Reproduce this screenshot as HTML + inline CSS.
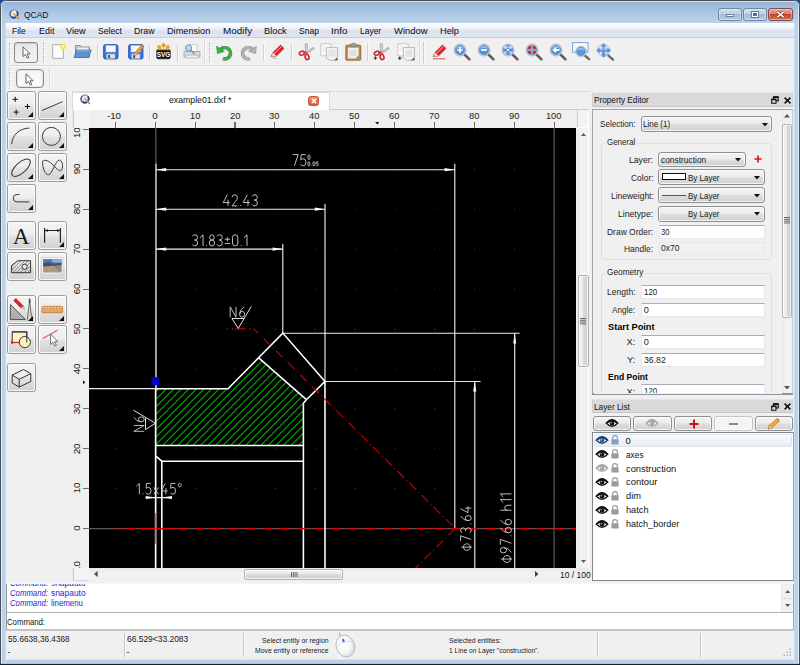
<!DOCTYPE html>
<html>
<head>
<meta charset="utf-8">
<title>QCAD</title>
<style>
html,body{margin:0;padding:0;}
body{width:800px;height:665px;overflow:hidden;background:#0b4aa8;font-family:"Liberation Sans",sans-serif;font-size:9px;color:#000;}
#win{position:absolute;left:0;top:0;width:800px;height:665px;overflow:hidden;border-radius:6px 6px 0 0;background:linear-gradient(#93aed0 0px,#9db9d9 5px,#aac5e2 12px,#b9d2ec 21px,#bbd4ed 40px,#b9d2ea 100%);}
.abs{position:absolute;box-sizing:border-box;}
.t{position:absolute;white-space:nowrap;line-height:1;}
svg{position:absolute;overflow:visible;}
.btn{border:1px solid #8e8f8f;border-radius:3px;background:linear-gradient(#f3f3f3 0,#ececec 48%,#dedede 52%,#d0d0d0 100%);box-shadow:inset 0 0 0 1px rgba(255,255,255,.75);}
.inp{background:#fff;border:1px solid #e3e9ef;border-top-color:#abadb3;}
.ro{background:#f0f0f0;border:1px solid #e6e6e6;}
.grip{border-left:1px dotted #b2b2b2;width:1px;}
.grip2{border-left:1px dotted #fff;width:1px;}
.sep{background:#d2d2d2;width:1px;}
</style>
</head>
<body>
<div id="win">
<div class="abs" style="left:0.00px;top:0.00px;width:800.00px;height:665.00px;border:1px solid #4a4f57;border-radius:6px 6px 0 0;"></div>
<div class="abs" style="left:1.00px;top:1.00px;width:798.00px;height:663.00px;border:1px solid rgba(255,255,255,.6);border-bottom:none;border-radius:5px 5px 0 0;"></div>
<div class="abs" style="left:6.00px;top:22.60px;width:788.00px;height:636.40px;background:#f0f0f0;"></div>
<div class="abs" style="left:5.00px;top:22.00px;width:1.00px;height:637.00px;background:#c9daee;"></div>
<div class="abs" style="left:794.00px;top:22.00px;width:1.00px;height:637.00px;background:#c9daee;"></div>
<div class="abs" style="left:5.00px;top:659.00px;width:790.00px;height:1.00px;background:#d9e6f4;"></div>
<div class="abs" style="left:1.00px;top:662.60px;width:798.00px;height:1.00px;background:#7fd6ea;"></div>
<div class="abs" style="left:0.00px;top:663.60px;width:800.00px;height:1.40px;background:#1a2026;"></div>
<svg style="left:9.0px;top:8.6px" width="11" height="11" viewBox="0 0 11 11"><circle cx="5" cy="5" r="4" fill="#f1f3f8" stroke="#9aa4c4" stroke-width="1.5"/><path d="M2.2 7.8A4 4 0 0 0 7.8 2.2" fill="none" stroke="#2c3f8c" stroke-width="1.7"/><path d="M2.2 7.8A4 4 0 0 1 2.6 1.9" fill="none" stroke="#5a6aa8" stroke-width="1.5"/><path d="M5 2.6V5H3" fill="none" stroke="#b9bccb" stroke-width=".6"/><path d="M5 5L9 9" stroke="#f0a020" stroke-width="1.7" stroke-linecap="round"/><circle cx="9.4" cy="9.4" r=".9" fill="#e07070"/></svg>
<div class="t" style="left:23.60px;top:9.70px;font-size:9.80px;transform:scaleX(0.8653);transform-origin:0 0;color:#10141c;">QCAD</div>
<div class="abs" style="left:717.50px;top:7.50px;width:24.00px;height:13.50px;background:linear-gradient(#cfdff0 0,#bdd0e8 45%,#a3bcdb 50%,#adc5e2 85%,#bcd2ea 100%);border:1px solid #75859c;border-radius:3px;box-shadow:inset 0 0 0 1px rgba(255,255,255,.35);"></div>
<div class="abs" style="left:742.80px;top:7.50px;width:24.00px;height:13.50px;background:linear-gradient(#cfdff0 0,#bdd0e8 45%,#a3bcdb 50%,#adc5e2 85%,#bcd2ea 100%);border:1px solid #75859c;border-radius:3px;box-shadow:inset 0 0 0 1px rgba(255,255,255,.35);"></div>
<div class="abs" style="left:768.00px;top:7.50px;width:25.00px;height:13.50px;background:linear-gradient(#e8a798 0,#d9806c 45%,#c6482e 50%,#d2603f 85%,#e08a62 100%);border:1px solid #7a4a50;border-radius:3px;box-shadow:inset 0 0 0 1px rgba(255,255,255,.35);"></div>
<div class="abs" style="left:725.50px;top:14.20px;width:8.00px;height:3.00px;background:#fff;border:1px solid #6f7c8c;"></div>
<div class="abs" style="left:750.80px;top:11.00px;width:8.00px;height:6.50px;background:#fff;border:1px solid #6f7c8c;"></div>
<div class="abs" style="left:752.80px;top:13.00px;width:4.00px;height:2.50px;background:#5a78a8;border:1px solid #5a6a80;"></div>
<svg style="left:775px;top:10px" width="11" height="9" viewBox="0 0 11 9"><path d="M2.4 1.8L8.6 7.2M8.6 1.8L2.4 7.2" stroke="#5b2a25" stroke-width="2.9" stroke-linecap="butt"/><path d="M2.4 1.8L8.6 7.2M8.6 1.8L2.4 7.2" stroke="#fff" stroke-width="1.7" stroke-linecap="butt"/></svg>
<div class="abs" style="left:6.00px;top:23.00px;width:788.00px;height:15.20px;background:linear-gradient(#ffffff 0,#f4f6fb 25%,#e6eaf5 50%,#dde2f0 55%,#dfe4f1 100%);border-bottom:1px solid #c9cedb;"></div>
<div class="t" style="left:12.40px;top:25.64px;font-size:9.40px;transform:scaleX(0.8979);transform-origin:0 0;color:#0a0a14;">File</div>
<div class="t" style="left:38.60px;top:25.64px;font-size:9.40px;transform:scaleX(0.9507);transform-origin:0 0;color:#0a0a14;">Edit</div>
<div class="t" style="left:66.00px;top:25.64px;font-size:9.40px;transform:scaleX(0.9700);transform-origin:0 0;color:#0a0a14;">View</div>
<div class="t" style="left:97.60px;top:25.64px;font-size:9.40px;transform:scaleX(0.9186);transform-origin:0 0;color:#0a0a14;">Select</div>
<div class="t" style="left:134.00px;top:25.64px;font-size:9.40px;transform:scaleX(0.9391);transform-origin:0 0;color:#0a0a14;">Draw</div>
<div class="t" style="left:167.00px;top:25.64px;font-size:9.40px;transform:scaleX(0.9773);transform-origin:0 0;color:#0a0a14;">Dimension</div>
<div class="t" style="left:223.20px;top:25.64px;font-size:9.40px;transform:scaleX(1.0547);transform-origin:0 0;color:#0a0a14;">Modify</div>
<div class="t" style="left:264.40px;top:25.64px;font-size:9.40px;transform:scaleX(0.9919);transform-origin:0 0;color:#0a0a14;">Block</div>
<div class="t" style="left:299.00px;top:25.64px;font-size:9.40px;transform:scaleX(0.9110);transform-origin:0 0;color:#0a0a14;">Snap</div>
<div class="t" style="left:331.00px;top:25.64px;font-size:9.40px;transform:scaleX(1.0460);transform-origin:0 0;color:#0a0a14;">Info</div>
<div class="t" style="left:360.40px;top:25.64px;font-size:9.40px;transform:scaleX(0.9016);transform-origin:0 0;color:#0a0a14;">Layer</div>
<div class="t" style="left:394.00px;top:25.64px;font-size:9.40px;transform:scaleX(1.0050);transform-origin:0 0;color:#0a0a14;">Window</div>
<div class="t" style="left:440.00px;top:25.64px;font-size:9.40px;transform:scaleX(0.9828);transform-origin:0 0;color:#0a0a14;">Help</div>
<div class="abs" style="left:6.00px;top:65.00px;width:788.00px;height:1.00px;background:#dcdcdc;"></div>
<div class="abs" style="left:6.00px;top:66.00px;width:788.00px;height:1.00px;background:#f8f8f8;"></div>
<div class="abs grip" style="left:9.00px;top:43.00px;width:1.00px;height:20.00px;"></div>
<div class="abs grip2" style="left:10.00px;top:44.00px;width:1.00px;height:20.00px;"></div>
<div class="abs" style="left:14.00px;top:41.60px;width:23.60px;height:21.00px;border:1px solid #8a8a8a;border-radius:3px;background:linear-gradient(#e4e4e4,#ececec 30%,#f2f2f2);box-shadow:inset 0 1px 1px rgba(0,0,0,.12);"></div>
<svg style="left:22.0px;top:46.0px" width="9.0" height="13.0" viewBox="0 0 9 13"><path d="M1 .8V10.6L3.4 8.4L5.2 12.2L6.8 11.5L5.1 7.8H8.2Z" fill="#fff" stroke="#555" stroke-width=".9" stroke-linejoin="round"/></svg>
<div class="abs grip" style="left:43.00px;top:43.00px;width:1.00px;height:20.00px;"></div>
<div class="abs grip2" style="left:44.00px;top:44.00px;width:1.00px;height:20.00px;"></div>
<svg style="left:51px;top:43.1px" width="16" height="17" viewBox="0 0 16 17"><path d="M1.5 1.5h11v14h-11z" fill="#fcfcfc" stroke="#b9b9b9"/><path d="M2.5 2.5h9v12h-9z" fill="none" stroke="#ececec"/><circle cx="12" cy="3.4" r="2.6" fill="#f6e948" stroke="#e9d640" stroke-width=".6"/><circle cx="12" cy="3.4" r="1.1" fill="#fffbd0"/></svg>
<svg style="left:73px;top:43.1px" width="19" height="16" viewBox="0 0 19 16"><path d="M2.5 14V2.5h5l1.2 1.5h7.8v10z" fill="#c9c9c9" stroke="#8f8f8f"/><path d="M4 4.5h11.5v8H4z" fill="#f4f4f4" stroke="#bdbdbd" stroke-width=".6"/><path d="M1 14.5L3.6 7h14.6L15.8 14.5z" fill="#5e93cf" stroke="#3d6ea8" stroke-width=".8"/><path d="M3.9 7.8h13.2" stroke="#a7c6ea" stroke-width=".8"/></svg>
<div class="abs sep" style="left:96.60px;top:44.00px;width:1.00px;height:17.00px;"></div>
<div class="abs" style="left:97.60px;top:44.00px;width:1.00px;height:17.00px;background:#fafafa;"></div>
<svg style="left:103.4px;top:43.6px" width="16" height="16" viewBox="0 0 16 16"><rect x=".7" y=".7" width="14.2" height="14.2" rx="1.6" fill="#3b73e0" stroke="#1f4fb8"/><rect x="3" y="1.6" width="9.6" height="6.4" fill="#f7f9ff" stroke="#c5d3f0" stroke-width=".5"/><rect x="3.6" y="10" width="8.4" height="4.6" fill="#dfe3ea" stroke="#9aa3b5" stroke-width=".5"/><rect x="5" y="11" width="2.2" height="3" fill="#4a5b80"/></svg>
<svg style="left:127.6px;top:43.6px" width="16" height="16" viewBox="0 0 16 16"><rect x=".7" y=".7" width="14.2" height="14.2" rx="1.6" fill="#3b73e0" stroke="#1f4fb8"/><rect x="3" y="1.6" width="9.6" height="6.4" fill="#f7f9ff" stroke="#c5d3f0" stroke-width=".5"/><rect x="3.6" y="10" width="8.4" height="4.6" fill="#dfe3ea" stroke="#9aa3b5" stroke-width=".5"/><rect x="5" y="11" width="2.2" height="3" fill="#4a5b80"/><path d="M6.2 11.4L7 8.6L13.2 1.2L15.4 3L9.2 10.4z" fill="#f0a030" stroke="#b06a18" stroke-width=".6"/><path d="M13.2 1.2L15.4 3L16 2L14.2 .3z" fill="#e05a50"/><path d="M6.2 11.4L7 8.6L9.2 10.4z" fill="#f3dfb8" stroke="#8a6a40" stroke-width=".4"/></svg>
<div class="abs sep" style="left:148.60px;top:44.00px;width:1.00px;height:17.00px;"></div>
<div class="abs" style="left:149.60px;top:44.00px;width:1.00px;height:17.00px;background:#fafafa;"></div>
<svg style="left:156px;top:43.1px" width="15" height="17" viewBox="0 0 15 17"><g fill="#f0a818" stroke="#b87400" stroke-width=".4"><circle cx="7.5" cy="2.2" r="1.7"/><circle cx="3.2" cy="4" r="1.6"/><circle cx="11.8" cy="4" r="1.6"/><circle cx="1.8" cy="7.6" r="1.4"/><circle cx="13.2" cy="7.6" r="1.4"/></g><path d="M7.5 3v5M3.6 4.6l3 3.4M11.4 4.6l-3 3.4" stroke="#f0a818" stroke-width="1.3"/><rect x=".7" y="7.2" width="13.6" height="8.6" rx="1.6" fill="#161616" stroke="#000" stroke-width=".6"/><text x="7.5" y="14.3" font-family="Liberation Sans" font-weight="bold" font-size="6.4" fill="#fff" text-anchor="middle">SVG</text></svg>
<div class="abs sep" style="left:177.40px;top:44.00px;width:1.00px;height:17.00px;"></div>
<div class="abs" style="left:178.40px;top:44.00px;width:1.00px;height:17.00px;background:#fafafa;"></div>
<svg style="left:183px;top:43.1px" width="18" height="17" viewBox="0 0 18 17"><path d="M5 1.5h9v7H5z" fill="#fdfdfd" stroke="#b5b5b5" stroke-width=".7"/><path d="M1 8.5h16v5.5H1z" fill="#d9dadc" stroke="#9b9da1" stroke-width=".8"/><path d="M2.5 12.2h13v2.6h-13z" fill="#f2f2f2" stroke="#a8a8a8" stroke-width=".6"/><circle cx="5.6" cy="5" r="3.1" fill="#b9d4f3" fill-opacity=".85" stroke="#6f8fb8" stroke-width="1"/><path d="M7.9 7.3l3.2 3.2" stroke="#8a8f99" stroke-width="1.5" stroke-linecap="round"/></svg>
<div class="abs" style="left:204.00px;top:39.00px;width:1.00px;height:26.00px;background:#d9d9d9;"></div>
<div class="abs" style="left:205.00px;top:39.00px;width:1.00px;height:26.00px;background:#fbfbfb;"></div>
<div class="abs grip" style="left:209.00px;top:43.00px;width:1.00px;height:20.00px;"></div>
<div class="abs grip2" style="left:210.00px;top:44.00px;width:1.00px;height:20.00px;"></div>
<svg style="left:216.0px;top:43.6px" width="17" height="16" viewBox="0 0 17 16"><g><path d="M4.2 6.2A5.6 5.6 0 1 1 7 14.6" fill="none" stroke="#2a8a34" stroke-width="3.6"/><path d="M4.2 6.2A5.6 5.6 0 1 1 7 14.6" fill="none" stroke="#3fb24a" stroke-width="2.4"/><path d="M.6 2.2L1.4 9.6L8.4 7.4z" fill="#3fb24a" stroke="#2a8a34" stroke-width=".6" stroke-linejoin="round"/></g></svg>
<svg style="left:240.0px;top:43.6px" width="17" height="16" viewBox="0 0 17 16"><g transform="translate(17,0) scale(-1,1)"><path d="M4.2 6.2A5.6 5.6 0 1 1 7 14.6" fill="none" stroke="#8e8e8e" stroke-width="3.6"/><path d="M4.2 6.2A5.6 5.6 0 1 1 7 14.6" fill="none" stroke="#b5b5b5" stroke-width="2.4"/><path d="M.6 2.2L1.4 9.6L8.4 7.4z" fill="#b5b5b5" stroke="#8e8e8e" stroke-width=".6" stroke-linejoin="round"/></g></svg>
<div class="abs sep" style="left:262.60px;top:44.00px;width:1.00px;height:17.00px;"></div>
<div class="abs" style="left:263.60px;top:44.00px;width:1.00px;height:17.00px;background:#fafafa;"></div>
<svg style="left:269.6px;top:43.6px" width="15" height="16" viewBox="0 0 15 16"><path d="M1.2 12.4L3 8.6L10.6 1L14 4.4L6.4 12z" fill="#d8262c" stroke="#a01419" stroke-width=".6"/><path d="M4.4 9.6L11.6 2.4" stroke="#f6b0a8" stroke-width="1"/><path d="M1.2 12.4L3 8.6L6.4 12z" fill="#f3e6d8" stroke="#b9a48f" stroke-width=".5"/><path d="M1.2 12.4l1.1-.4l-.7-.7z" fill="#333"/><path d="M1.6 14.2h5.4" stroke="#cfcfcf" stroke-width="1.6"/></svg>
<div class="abs sep" style="left:291.40px;top:44.00px;width:1.00px;height:17.00px;"></div>
<div class="abs" style="left:292.40px;top:44.00px;width:1.00px;height:17.00px;background:#fafafa;"></div>
<svg style="left:297.6px;top:43.1px" width="17" height="17" viewBox="0 0 17 17"><path d="M7.2 .8L9.4 .8L9.2 9.6L7.6 9.6z" fill="#d6d8db" stroke="#8f9297" stroke-width=".6"/><path d="M15.4 4.2L16.2 5.8L8.8 10.6L8 9.4z" fill="#c8cbcf" stroke="#8f9297" stroke-width=".6"/><ellipse cx="3.8" cy="10.2" rx="2.6" ry="1.9" fill="none" stroke="#d6232a" stroke-width="1.6" transform="rotate(-20 3.8 10.2)"/><ellipse cx="9" cy="14" rx="1.9" ry="2.6" fill="none" stroke="#d6232a" stroke-width="1.6" transform="rotate(-15 9 14)"/><path d="M6 9.6L8.4 9.2M8.4 10.2L8.8 11.6" stroke="#d6232a" stroke-width="1.6"/></svg>
<svg style="left:320.0px;top:43.1px" width="19" height="18" viewBox="0 0 19 18"><path d="M.8 .8h10.4v12H.8z" fill="#fafafa" stroke="#bdbdbd" stroke-width=".8"/><path d="M2.6 3.4h3M2.6 5.4h3M2.6 7.4h3" stroke="#dcdcdc" stroke-width=".7"/><path d="M6.4 4.6h11v12.6H9.6L6.4 14.6z" fill="#f6f6f6" stroke="#a9a9a9" stroke-width=".8"/><path d="M8.4 6.8h7.2v7H8.4z" fill="#e3e3e3"/><path d="M14 17.2L17.4 14.2V17.2z" fill="#555"/></svg>
<svg style="left:345px;top:42.6px" width="17" height="18" viewBox="0 0 17 18"><rect x=".8" y="2.2" width="15" height="15" rx="1" fill="#c48a3a" stroke="#8e5e1e" stroke-width=".8"/><path d="M3 4.6h10.6v10.8H3z" fill="#f2f2f2" stroke="#c9c9c9" stroke-width=".5"/><path d="M4.6 7h7.4v6.4H4.6z" fill="#e0e0e0"/><path d="M4.8 3.8V2.2Q4.8 1 6 1H7Q7.4 0 8.4 0T9.8 1H10.8Q12 1 12 2.2V3.8z" fill="#9a9c9e" stroke="#6d6f72" stroke-width=".6"/><path d="M10.6 15.4L13.6 12.6V15.4z" fill="#777"/></svg>
<div class="abs sep" style="left:367.40px;top:44.00px;width:1.00px;height:17.00px;"></div>
<div class="abs" style="left:368.40px;top:44.00px;width:1.00px;height:17.00px;background:#fafafa;"></div>
<svg style="left:373.0px;top:43.1px" width="17" height="17" viewBox="0 0 17 17"><path d="M7.2 .8L9.4 .8L9.2 9.6L7.6 9.6z" fill="#d6d8db" stroke="#8f9297" stroke-width=".6"/><path d="M15.4 4.2L16.2 5.8L8.8 10.6L8 9.4z" fill="#c8cbcf" stroke="#8f9297" stroke-width=".6"/><ellipse cx="3.8" cy="10.2" rx="2.6" ry="1.9" fill="none" stroke="#d6232a" stroke-width="1.6" transform="rotate(-20 3.8 10.2)"/><ellipse cx="9" cy="14" rx="1.9" ry="2.6" fill="none" stroke="#d6232a" stroke-width="1.6" transform="rotate(-15 9 14)"/><path d="M6 9.6L8.4 9.2M8.4 10.2L8.8 11.6" stroke="#d6232a" stroke-width="1.6"/><path d="M2.4 13.2v3.6M.6 15h3.6" stroke="#333" stroke-width="1"/></svg>
<svg style="left:396.6px;top:43.1px" width="19" height="18" viewBox="0 0 19 18"><path d="M.8 .8h10.4v12H.8z" fill="#fafafa" stroke="#bdbdbd" stroke-width=".8"/><path d="M2.6 3.4h3M2.6 5.4h3M2.6 7.4h3" stroke="#dcdcdc" stroke-width=".7"/><path d="M6.4 4.6h11v12.6H9.6L6.4 14.6z" fill="#f6f6f6" stroke="#a9a9a9" stroke-width=".8"/><path d="M8.4 6.8h7.2v7H8.4z" fill="#e3e3e3"/><path d="M14 17.2L17.4 14.2V17.2z" fill="#555"/><path d="M2.8 13.4v3.6M1 15.2h3.6" stroke="#333" stroke-width="1"/></svg>
<div class="abs" style="left:418.50px;top:39.00px;width:1.00px;height:26.00px;background:#d9d9d9;"></div>
<div class="abs" style="left:419.50px;top:39.00px;width:1.00px;height:26.00px;background:#fbfbfb;"></div>
<div class="abs grip" style="left:423.00px;top:43.00px;width:1.00px;height:20.00px;"></div>
<div class="abs grip2" style="left:424.00px;top:44.00px;width:1.00px;height:20.00px;"></div>
<svg style="left:431.6px;top:43.6px" width="15" height="16" viewBox="0 0 15 16"><path d="M1.2 12.4L3 8.6L10.6 1L14 4.4L6.4 12z" fill="#d8262c" stroke="#a01419" stroke-width=".6"/><path d="M4.4 9.6L11.6 2.4" stroke="#f6b0a8" stroke-width="1"/><path d="M1.2 12.4L3 8.6L6.4 12z" fill="#f3e6d8" stroke="#b9a48f" stroke-width=".5"/><path d="M1.2 12.4l1.1-.4l-.7-.7z" fill="#333"/><path d="M1 14.8h12" stroke="#e0444a" stroke-width="1"/></svg>
<svg style="left:453.4px;top:42.6px" width="18" height="18" viewBox="0 0 18 18"><path d="M10.6 10.8L16.4 16.2" stroke="#7d7d7d" stroke-width="2.8" stroke-linecap="round"/><path d="M10.6 10.8L16.2 16" stroke="#4e4e4e" stroke-width="1.4" stroke-linecap="round"/><circle cx="7" cy="7" r="6" fill="#d5d8dc" stroke="#b4b7bb" stroke-width="1"/><circle cx="7" cy="7" r="4.6" fill="#4f93dc" stroke="#3a78c0" stroke-width=".6"/><path d="M2.8 6A4.4 4.4 0 0 1 11.2 6Q7 4.2 2.8 6z" fill="#9cc6f2" fill-opacity=".8"/><path d="M7 4.2v5.6M4.2 7h5.6" stroke="#fff" stroke-width="1.7"/></svg>
<svg style="left:477.2px;top:42.6px" width="18" height="18" viewBox="0 0 18 18"><path d="M10.6 10.8L16.4 16.2" stroke="#7d7d7d" stroke-width="2.8" stroke-linecap="round"/><path d="M10.6 10.8L16.2 16" stroke="#4e4e4e" stroke-width="1.4" stroke-linecap="round"/><circle cx="7" cy="7" r="6" fill="#d5d8dc" stroke="#b4b7bb" stroke-width="1"/><circle cx="7" cy="7" r="4.6" fill="#4f93dc" stroke="#3a78c0" stroke-width=".6"/><path d="M2.8 6A4.4 4.4 0 0 1 11.2 6Q7 4.2 2.8 6z" fill="#9cc6f2" fill-opacity=".8"/><path d="M4.2 7h5.6" stroke="#fff" stroke-width="1.8"/></svg>
<svg style="left:501.0px;top:42.6px" width="18" height="18" viewBox="0 0 18 18"><path d="M10.6 10.8L16.4 16.2" stroke="#7d7d7d" stroke-width="2.8" stroke-linecap="round"/><path d="M10.6 10.8L16.2 16" stroke="#4e4e4e" stroke-width="1.4" stroke-linecap="round"/><circle cx="7" cy="7" r="6" fill="#d5d8dc" stroke="#b4b7bb" stroke-width="1"/><circle cx="7" cy="7" r="4.6" fill="#4f93dc" stroke="#3a78c0" stroke-width=".6"/><path d="M2.8 6A4.4 4.4 0 0 1 11.2 6Q7 4.2 2.8 6z" fill="#9cc6f2" fill-opacity=".8"/><path d="M4 5.4V4h1.6M8.6 4H10v1.4M10 8.6V10H8.6M5.6 10H4V8.6" fill="none" stroke="#fff" stroke-width="1.1"/><path d="M5.4 5.4l3.2 3.2M8.6 5.4L5.4 8.6" stroke="#fff" stroke-width=".8"/></svg>
<svg style="left:525.0px;top:42.6px" width="18" height="18" viewBox="0 0 18 18"><path d="M10.6 10.8L16.4 16.2" stroke="#7d7d7d" stroke-width="2.8" stroke-linecap="round"/><path d="M10.6 10.8L16.2 16" stroke="#4e4e4e" stroke-width="1.4" stroke-linecap="round"/><circle cx="7" cy="7" r="6" fill="#d5d8dc" stroke="#b4b7bb" stroke-width="1"/><circle cx="7" cy="7" r="4.6" fill="#4f93dc" stroke="#3a78c0" stroke-width=".6"/><path d="M2.8 6A4.4 4.4 0 0 1 11.2 6Q7 4.2 2.8 6z" fill="#9cc6f2" fill-opacity=".8"/><rect x="4.3" y="4.3" width="5.4" height="5.4" fill="#8fbcee" stroke="#cc1c22" stroke-width="1.9"/><path d="M7 3V5M7 9V11M3 7H5M9 7H11" stroke="#8fbcee" stroke-width="1.5"/></svg>
<svg style="left:548.8px;top:42.6px" width="18" height="18" viewBox="0 0 18 18"><path d="M10.6 10.8L16.4 16.2" stroke="#7d7d7d" stroke-width="2.8" stroke-linecap="round"/><path d="M10.6 10.8L16.2 16" stroke="#4e4e4e" stroke-width="1.4" stroke-linecap="round"/><circle cx="7" cy="7" r="6" fill="#d5d8dc" stroke="#b4b7bb" stroke-width="1"/><circle cx="7" cy="7" r="4.6" fill="#4f93dc" stroke="#3a78c0" stroke-width=".6"/><path d="M2.8 6A4.4 4.4 0 0 1 11.2 6Q7 4.2 2.8 6z" fill="#9cc6f2" fill-opacity=".8"/><path d="M3.4 7L7 4V6H10.4V8H7V10z" fill="#fff"/></svg>
<svg style="left:572px;top:42.1px" width="19" height="19" viewBox="0 0 19 19"><rect x=".6" y=".6" width="15.4" height="9.6" fill="#fbfcff" stroke="#7a9fd8" stroke-width="1"/><path d="M12.2 12.8L17 17.2" stroke="#6a6a6a" stroke-width="2.4" stroke-linecap="round"/><circle cx="9" cy="9.4" r="5.4" fill="#d5d8dc" stroke="#b4b7bb" stroke-width=".8"/><circle cx="9" cy="9.4" r="4.2" fill="#5a9ae0" stroke="#3a78c0" stroke-width=".6"/><path d="M5.2 8.4A4 4 0 0 1 12.8 8.4Q9 6.8 5.2 8.4z" fill="#a9cdf4" fill-opacity=".85"/></svg>
<svg style="left:595.5px;top:42.6px" width="19" height="18" viewBox="0 0 19 18"><path d="M11.4 11.6L17 16.6" stroke="#6a6a6a" stroke-width="2.4" stroke-linecap="round"/><circle cx="7.6" cy="7.4" r="6.2" fill="#d9e4f4" fill-opacity=".7" stroke="#b4bcc8" stroke-width=".8"/><path d="M7.6 .6L9.8 3.4H8.6V6.4H11.6V5.2L14.6 7.4L11.6 9.6V8.4H8.6V11.4H9.8L7.6 14.2L5.4 11.4H6.6V8.4H3.6V9.6L.6 7.4L3.6 5.2V6.4H6.6V3.4H5.4z" fill="#5f9de4" stroke="#3f7cc8" stroke-width=".6"/><path d="M6.9 3.6v3.1H3.8M8.3 3.6v3.1h3.1" stroke="#cfe2f8" stroke-width=".5" fill="none"/></svg>
<div class="abs grip" style="left:9.00px;top:68.00px;width:1.00px;height:21.00px;"></div>
<div class="abs grip2" style="left:10.00px;top:69.00px;width:1.00px;height:21.00px;"></div>
<div class="abs" style="left:15.60px;top:69.00px;width:28.60px;height:19.40px;border:1px solid #8b8b8b;border-radius:4px;background:linear-gradient(#f4f4f4,#fbfbfb);box-shadow:inset 0 0 0 1px #e4e4e4;"></div>
<svg style="left:25.2px;top:72.6px" width="9.0" height="13.0" viewBox="0 0 9 13"><path d="M1 .8V10.6L3.4 8.4L5.2 12.2L6.8 11.5L5.1 7.8H8.2Z" fill="#fff" stroke="#555" stroke-width=".9" stroke-linejoin="round"/></svg>
<div class="abs" style="left:48.60px;top:68.00px;width:1.00px;height:21.00px;background:#dadada;"></div>
<div class="abs" style="left:49.60px;top:68.00px;width:1.00px;height:21.00px;background:#fbfbfb;"></div>
<div class="abs" style="left:7.40px;top:91.00px;width:28.60px;height:29.00px;border:1px solid #9b9b9b;border-radius:2.5px;background:linear-gradient(#f4f4f4 0,#eeeeee 45%,#e1e1e1 55%,#d2d2d2 100%);box-shadow:inset 0 0 0 1px rgba(255,255,255,.8);"></div>
<svg style="left:7.4px;top:91.0px" width="28.6" height="29.0" viewBox="0 0 28.6 28.8"><path d="M5.6 8.2h5.2M8.2 5.6v5.2" stroke="#111" stroke-width="1"/><path d="M17.9 15.4h5.2M20.5 12.8v5.2" stroke="#111" stroke-width="1"/><path d="M6.6 21.0h5.2M9.2 18.4v5.2" stroke="#111" stroke-width="1"/></svg>
<svg style="left:28.0px;top:112.0px" width="5" height="5" viewBox="0 0 5 5"><path d="M5 0V5H0z" fill="#111"/></svg>
<div class="abs" style="left:38.40px;top:91.00px;width:28.60px;height:29.00px;border:1px solid #9b9b9b;border-radius:2.5px;background:linear-gradient(#f4f4f4 0,#eeeeee 45%,#e1e1e1 55%,#d2d2d2 100%);box-shadow:inset 0 0 0 1px rgba(255,255,255,.8);"></div>
<svg style="left:38.4px;top:91.0px" width="28.6" height="29.0" viewBox="0 0 28.6 28.8"><path d="M4 19.4L24.6 10.6" stroke="#3a3a3a" stroke-width="1" fill="none"/></svg>
<svg style="left:59.0px;top:112.0px" width="5" height="5" viewBox="0 0 5 5"><path d="M5 0V5H0z" fill="#111"/></svg>
<div class="abs" style="left:7.40px;top:122.00px;width:28.60px;height:29.00px;border:1px solid #9b9b9b;border-radius:2.5px;background:linear-gradient(#f4f4f4 0,#eeeeee 45%,#e1e1e1 55%,#d2d2d2 100%);box-shadow:inset 0 0 0 1px rgba(255,255,255,.8);"></div>
<svg style="left:7.4px;top:122.0px" width="28.6" height="29.0" viewBox="0 0 28.6 28.8"><path d="M4.8 22A17.6 16 0 0 1 22.4 6" stroke="#3a3a3a" stroke-width="1" fill="none"/></svg>
<svg style="left:28.0px;top:143.0px" width="5" height="5" viewBox="0 0 5 5"><path d="M5 0V5H0z" fill="#111"/></svg>
<div class="abs" style="left:38.40px;top:122.00px;width:28.60px;height:29.00px;border:1px solid #9b9b9b;border-radius:2.5px;background:linear-gradient(#f4f4f4 0,#eeeeee 45%,#e1e1e1 55%,#d2d2d2 100%);box-shadow:inset 0 0 0 1px rgba(255,255,255,.8);"></div>
<svg style="left:38.4px;top:122.0px" width="28.6" height="29.0" viewBox="0 0 28.6 28.8"><circle cx="13.4" cy="14.3" r="9" stroke="#3a3a3a" stroke-width="1" fill="none"/></svg>
<svg style="left:59.0px;top:143.0px" width="5" height="5" viewBox="0 0 5 5"><path d="M5 0V5H0z" fill="#111"/></svg>
<div class="abs" style="left:7.40px;top:153.00px;width:28.60px;height:29.00px;border:1px solid #9b9b9b;border-radius:2.5px;background:linear-gradient(#f4f4f4 0,#eeeeee 45%,#e1e1e1 55%,#d2d2d2 100%);box-shadow:inset 0 0 0 1px rgba(255,255,255,.8);"></div>
<svg style="left:7.4px;top:153.0px" width="28.6" height="29.0" viewBox="0 0 28.6 28.8"><ellipse cx="14" cy="14.6" rx="11.6" ry="5.2" transform="rotate(-42 14 14.6)" stroke="#3a3a3a" stroke-width="1" fill="none"/></svg>
<svg style="left:28.0px;top:174.0px" width="5" height="5" viewBox="0 0 5 5"><path d="M5 0V5H0z" fill="#111"/></svg>
<div class="abs" style="left:38.40px;top:153.00px;width:28.60px;height:29.00px;border:1px solid #9b9b9b;border-radius:2.5px;background:linear-gradient(#f4f4f4 0,#eeeeee 45%,#e1e1e1 55%,#d2d2d2 100%);box-shadow:inset 0 0 0 1px rgba(255,255,255,.8);"></div>
<svg style="left:38.4px;top:153.0px" width="28.6" height="29.0" viewBox="0 0 28.6 28.8"><path d="M4.6 8C4.2 14 7 22 10.6 21.6C14.4 21.2 17.6 6.6 21.4 7C24.4 7.4 25 12 24.2 15.4C23 20 20 17 16 12.8C11 7.6 7 6 4.6 8z" stroke="#3a3a3a" stroke-width="1" fill="none"/></svg>
<svg style="left:59.0px;top:174.0px" width="5" height="5" viewBox="0 0 5 5"><path d="M5 0V5H0z" fill="#111"/></svg>
<div class="abs" style="left:7.40px;top:184.00px;width:28.60px;height:29.00px;border:1px solid #9b9b9b;border-radius:2.5px;background:linear-gradient(#f4f4f4 0,#eeeeee 45%,#e1e1e1 55%,#d2d2d2 100%);box-shadow:inset 0 0 0 1px rgba(255,255,255,.8);"></div>
<svg style="left:7.4px;top:184.0px" width="28.6" height="29.0" viewBox="0 0 28.6 28.8"><path d="M12.6 10.4H10A3.7 3.7 0 0 0 10 17.8H22.4" stroke="#3a3a3a" stroke-width="1" fill="none"/></svg>
<svg style="left:28.0px;top:205.0px" width="5" height="5" viewBox="0 0 5 5"><path d="M5 0V5H0z" fill="#111"/></svg>
<div class="abs" style="left:7.40px;top:221.00px;width:28.60px;height:29.00px;border:1px solid #9b9b9b;border-radius:2.5px;background:linear-gradient(#f4f4f4 0,#eeeeee 45%,#e1e1e1 55%,#d2d2d2 100%);box-shadow:inset 0 0 0 1px rgba(255,255,255,.8);"></div>
<svg style="left:7.4px;top:221.0px" width="28.6" height="29.0" viewBox="0 0 28.6 28.8"><text x="14.2" y="22.8" font-family="Liberation Serif" font-size="23.4" text-anchor="middle" fill="#1a1a1a">A</text></svg>
<div class="abs" style="left:38.40px;top:221.00px;width:28.60px;height:29.00px;border:1px solid #9b9b9b;border-radius:2.5px;background:linear-gradient(#f4f4f4 0,#eeeeee 45%,#e1e1e1 55%,#d2d2d2 100%);box-shadow:inset 0 0 0 1px rgba(255,255,255,.8);"></div>
<svg style="left:38.4px;top:221.0px" width="28.6" height="29.0" viewBox="0 0 28.6 28.8"><path d="M6.6 7V21.6M22.4 7V21.6" stroke="#222" stroke-width="1.2"/><path d="M6.6 9.4H22.4" stroke="#222" stroke-width="1"/><path d="M6.8 9.4l3-1.4v2.8zM22.2 9.4l-3-1.4v2.8z" fill="#222"/></svg>
<svg style="left:59.0px;top:242.0px" width="5" height="5" viewBox="0 0 5 5"><path d="M5 0V5H0z" fill="#111"/></svg>
<div class="abs" style="left:7.40px;top:252.00px;width:28.60px;height:29.00px;border:1px solid #9b9b9b;border-radius:2.5px;background:linear-gradient(#f4f4f4 0,#eeeeee 45%,#e1e1e1 55%,#d2d2d2 100%);box-shadow:inset 0 0 0 1px rgba(255,255,255,.8);"></div>
<svg style="left:7.4px;top:252.0px" width="28.6" height="29.0" viewBox="0 0 28.6 28.8"><defs><pattern id="hp" width="2.6" height="2.6" patternUnits="userSpaceOnUse" patternTransform="rotate(45)"><path d="M0 0V2.6" stroke="#444" stroke-width="1"/></pattern></defs><path d="M4.6 20.6V13.4L11 8.6H23.6V20.6z" fill="url(#hp)" stroke="#333" stroke-width="1"/><circle cx="17.6" cy="14.6" r="2.6" fill="#ececec" stroke="#333" stroke-width="1"/></svg>
<div class="abs" style="left:38.40px;top:252.00px;width:28.60px;height:29.00px;border:1px solid #9b9b9b;border-radius:2.5px;background:linear-gradient(#f4f4f4 0,#eeeeee 45%,#e1e1e1 55%,#d2d2d2 100%);box-shadow:inset 0 0 0 1px rgba(255,255,255,.8);"></div>
<svg style="left:38.4px;top:252.0px" width="28.6" height="29.0" viewBox="0 0 28.6 28.8"><rect x="3.6" y="5.6" width="21.4" height="16.4" fill="#fbfbfb" stroke="#c9c9c9" stroke-width=".8"/><rect x="5.2" y="7.2" width="18.2" height="13" fill="#6f6a62"/><rect x="5.2" y="7.2" width="18.2" height="5" fill="#4f78b4"/><path d="M14 7.2H23.4V11L14 10z" fill="#88aee0"/><path d="M5.2 11.4L10 10L15 11.6L23.4 10.6V14H5.2z" fill="#4a4f5c"/><path d="M5.2 20.2V15L16 13.4L23.4 20.2z" fill="#a89b86"/><path d="M17 13.4L23.4 13V20.2z" fill="#8e8a84"/></svg>
<div class="abs" style="left:7.40px;top:294.80px;width:28.60px;height:29.00px;border:1px solid #9b9b9b;border-radius:2.5px;background:linear-gradient(#f4f4f4 0,#eeeeee 45%,#e1e1e1 55%,#d2d2d2 100%);box-shadow:inset 0 0 0 1px rgba(255,255,255,.8);"></div>
<svg style="left:7.4px;top:294.8px" width="28.6" height="29.0" viewBox="0 0 28.6 28.8"><defs><pattern id="hp2" width="2" height="2" patternUnits="userSpaceOnUse"><path d="M0 1H2M1 0V2" stroke="#777" stroke-width=".5"/></pattern></defs><path d="M3.4 24.4V9.4L18.4 24.4z" fill="url(#hp2)" stroke="#555" stroke-width="1"/><path d="M6.6 5.4L9 3.4L16.4 10.8L13.6 12.6z" fill="#d8262c" stroke="#8e1418" stroke-width=".5"/><path d="M13.6 12.6L16.4 10.8L17.6 14z" fill="#f0dcc0" stroke="#555" stroke-width=".4"/><path d="M20.4 24.4L22.6 6L24.8 24.4" fill="none" stroke="#666" stroke-width="1"/><path d="M22.6 3.6V8" stroke="#444" stroke-width="1.6"/></svg>
<svg style="left:28.0px;top:315.8px" width="5" height="5" viewBox="0 0 5 5"><path d="M5 0V5H0z" fill="#111"/></svg>
<div class="abs" style="left:38.40px;top:294.80px;width:28.60px;height:29.00px;border:1px solid #9b9b9b;border-radius:2.5px;background:linear-gradient(#f4f4f4 0,#eeeeee 45%,#e1e1e1 55%,#d2d2d2 100%);box-shadow:inset 0 0 0 1px rgba(255,255,255,.8);"></div>
<svg style="left:38.4px;top:294.8px" width="28.6" height="29.0" viewBox="0 0 28.6 28.8"><rect x="4" y="11.2" width="20.6" height="6.4" rx=".8" fill="#e6a468" stroke="#b87838" stroke-width=".8"/><path d="M4.6 12.2H24" stroke="#f6cfa4" stroke-width="1"/><path d="M6.6 11.4v2M9.6 11.4v2M12.6 11.4v2M15.6 11.4v2M18.6 11.4v2M21.6 11.4v2" stroke="#a86a30" stroke-width=".5"/></svg>
<svg style="left:59.0px;top:315.8px" width="5" height="5" viewBox="0 0 5 5"><path d="M5 0V5H0z" fill="#111"/></svg>
<div class="abs" style="left:7.40px;top:325.30px;width:28.60px;height:29.00px;border:1px solid #9b9b9b;border-radius:2.5px;background:linear-gradient(#f4f4f4 0,#eeeeee 45%,#e1e1e1 55%,#d2d2d2 100%);box-shadow:inset 0 0 0 1px rgba(255,255,255,.8);"></div>
<svg style="left:7.4px;top:325.3px" width="28.6" height="29.0" viewBox="0 0 28.6 28.8"><rect x="5.2" y="6.8" width="14.6" height="10.6" fill="#fdf2c0" stroke="#333" stroke-width="1"/><circle cx="17.8" cy="17" r="5.6" fill="#fdf2c0" stroke="#333" stroke-width="1"/><path d="M5.2 6.8h14.6v10.6" fill="none" stroke="#333" stroke-width="1"/><path d="M4.2 17.4h7.6" stroke="#e02020" stroke-width="1.2"/><rect x="4" y="16.2" width="2.2" height="2.4" fill="#e02020"/></svg>
<div class="abs" style="left:38.40px;top:325.30px;width:28.60px;height:29.00px;border:1px solid #9b9b9b;border-radius:2.5px;background:linear-gradient(#f4f4f4 0,#eeeeee 45%,#e1e1e1 55%,#d2d2d2 100%);box-shadow:inset 0 0 0 1px rgba(255,255,255,.8);"></div>
<svg style="left:38.4px;top:325.3px" width="28.6" height="29.0" viewBox="0 0 28.6 28.8"><path d="M4.6 13.4L19.6 5.2" stroke="#f05058" stroke-width="1.1"/><path d="M12.6 9V19.4L15 17.2L16.8 21L18.4 20.2L16.6 16.6H19.8z" fill="#fff" stroke="#666" stroke-width=".9" stroke-linejoin="round"/></svg>
<svg style="left:59.0px;top:346.3px" width="5" height="5" viewBox="0 0 5 5"><path d="M5 0V5H0z" fill="#111"/></svg>
<div class="abs" style="left:7.40px;top:362.80px;width:28.60px;height:29.00px;border:1px solid #9b9b9b;border-radius:2.5px;background:linear-gradient(#f4f4f4 0,#eeeeee 45%,#e1e1e1 55%,#d2d2d2 100%);box-shadow:inset 0 0 0 1px rgba(255,255,255,.8);"></div>
<svg style="left:7.4px;top:362.8px" width="28.6" height="29.0" viewBox="0 0 28.6 28.8"><path d="M5.2 12L16.6 6.4L23.8 10.6V18.4L12.2 24L5.2 19.8zM5.2 12L12.2 16.2L23.8 10.6M12.2 16.2V24" fill="none" stroke="#333" stroke-width="1" stroke-linejoin="round"/></svg>
<div class="abs" style="left:72.00px;top:91.00px;width:518.00px;height:1.00px;background:#dddddd;"></div>
<div class="abs" style="left:72.00px;top:91.50px;width:257.50px;height:18.00px;background:#fff;border:1px solid #d9d9d9;border-bottom:none;"></div>
<svg style="left:80.4px;top:94.4px" width="11" height="11" viewBox="0 0 11 11"><circle cx="5" cy="5" r="4" fill="#f1f3f8" stroke="#9aa4c4" stroke-width="1.5"/><path d="M2.2 7.8A4 4 0 0 0 7.8 2.2" fill="none" stroke="#2c3f8c" stroke-width="1.7"/><path d="M2.2 7.8A4 4 0 0 1 2.6 1.9" fill="none" stroke="#5a6aa8" stroke-width="1.5"/><path d="M5 2.6V5H3" fill="none" stroke="#b9bccb" stroke-width=".6"/><path d="M5 5L9 9" stroke="#f0a020" stroke-width="1.7" stroke-linecap="round"/><circle cx="9.4" cy="9.4" r=".9" fill="#e07070"/></svg>
<div class="t" style="left:168.80px;top:96.01px;font-size:9.20px;transform:scaleX(0.9474);transform-origin:0 0;color:#111;">example01.dxf *</div>
<div class="abs" style="left:308.30px;top:95.60px;width:11.00px;height:10.40px;background:linear-gradient(#f08a66,#dc5a38);border:1px solid #c9553a;border-radius:2.5px;"></div>
<svg style="left:311px;top:98px" width="6" height="6" viewBox="0 0 6 6"><path d="M.8 .8L5.2 5.2M5.2 .8L.8 5.2" stroke="#fff" stroke-width="1.5"/></svg>
<div class="abs" style="left:72.00px;top:110.00px;width:517.00px;height:18.00px;background:#efefef;"></div>
<div class="abs" style="left:72.00px;top:110.00px;width:17.00px;height:458.00px;background:#efefef;"></div>
<div class="abs" style="left:329.00px;top:109.00px;width:260.00px;height:1.00px;background:#cccccc;"></div>
<div class="abs" style="left:72.50px;top:110.00px;width:16.50px;height:18.00px;background:#f4f4f4;border-left:1px solid #c8c8c8;border-top:1px solid #fff;"></div>
<div class="abs" style="left:576.50px;top:110.00px;width:12.50px;height:18.00px;background:#f3f3f3;border-left:1px solid #cfcfcf;border-right:1px solid #fff;border-bottom:1px solid #fff;"></div>
<div class="abs" style="left:114.82px;top:122.40px;width:1.10px;height:5.60px;background:#6a6a6a;"></div>
<div class="t" style="left:107.12px;top:111.22px;font-size:9.90px;transform:scaleX(0.9784);transform-origin:0 0;color:#222;">-10</div>
<div class="abs" style="left:154.70px;top:122.40px;width:1.10px;height:5.60px;background:#6a6a6a;"></div>
<div class="t" style="left:152.25px;top:111.22px;font-size:9.90px;color:#222;">0</div>
<div class="abs" style="left:194.58px;top:122.40px;width:1.10px;height:5.60px;background:#6a6a6a;"></div>
<div class="t" style="left:189.68px;top:111.22px;font-size:9.90px;transform:scaleX(0.9444);transform-origin:0 0;color:#222;">10</div>
<div class="abs" style="left:234.46px;top:122.40px;width:1.10px;height:5.60px;background:#6a6a6a;"></div>
<div class="t" style="left:229.56px;top:111.22px;font-size:9.90px;transform:scaleX(0.9444);transform-origin:0 0;color:#222;">20</div>
<div class="abs" style="left:274.34px;top:122.40px;width:1.10px;height:5.60px;background:#6a6a6a;"></div>
<div class="t" style="left:269.44px;top:111.22px;font-size:9.90px;transform:scaleX(0.9444);transform-origin:0 0;color:#222;">30</div>
<div class="abs" style="left:314.22px;top:122.40px;width:1.10px;height:5.60px;background:#6a6a6a;"></div>
<div class="t" style="left:309.32px;top:111.22px;font-size:9.90px;transform:scaleX(0.9444);transform-origin:0 0;color:#222;">40</div>
<div class="abs" style="left:354.10px;top:122.40px;width:1.10px;height:5.60px;background:#6a6a6a;"></div>
<div class="t" style="left:349.20px;top:111.22px;font-size:9.90px;transform:scaleX(0.9444);transform-origin:0 0;color:#222;">50</div>
<div class="abs" style="left:393.98px;top:122.40px;width:1.10px;height:5.60px;background:#6a6a6a;"></div>
<div class="t" style="left:389.08px;top:111.22px;font-size:9.90px;transform:scaleX(0.9444);transform-origin:0 0;color:#222;">60</div>
<div class="abs" style="left:433.86px;top:122.40px;width:1.10px;height:5.60px;background:#6a6a6a;"></div>
<div class="t" style="left:428.96px;top:111.22px;font-size:9.90px;transform:scaleX(0.9444);transform-origin:0 0;color:#222;">70</div>
<div class="abs" style="left:473.74px;top:122.40px;width:1.10px;height:5.60px;background:#6a6a6a;"></div>
<div class="t" style="left:468.84px;top:111.22px;font-size:9.90px;transform:scaleX(0.9444);transform-origin:0 0;color:#222;">80</div>
<div class="abs" style="left:513.62px;top:122.40px;width:1.10px;height:5.60px;background:#6a6a6a;"></div>
<div class="t" style="left:508.72px;top:111.22px;font-size:9.90px;transform:scaleX(0.9444);transform-origin:0 0;color:#222;">90</div>
<div class="abs" style="left:553.50px;top:122.40px;width:1.10px;height:5.60px;background:#6a6a6a;"></div>
<div class="t" style="left:546.10px;top:111.22px;font-size:9.90px;transform:scaleX(0.9323);transform-origin:0 0;color:#222;">100</div>
<div class="abs" style="left:83.00px;top:567.68px;width:6.00px;height:1.10px;background:#6a6a6a;"></div>
<div class="abs" style="left:83.00px;top:527.80px;width:6.00px;height:1.10px;background:#6a6a6a;"></div>
<div class="abs" style="left:83.00px;top:487.92px;width:6.00px;height:1.10px;background:#6a6a6a;"></div>
<div class="abs" style="left:83.00px;top:448.04px;width:6.00px;height:1.10px;background:#6a6a6a;"></div>
<div class="abs" style="left:83.00px;top:408.16px;width:6.00px;height:1.10px;background:#6a6a6a;"></div>
<div class="abs" style="left:83.00px;top:368.28px;width:6.00px;height:1.10px;background:#6a6a6a;"></div>
<div class="abs" style="left:83.00px;top:328.40px;width:6.00px;height:1.10px;background:#6a6a6a;"></div>
<div class="abs" style="left:83.00px;top:288.52px;width:6.00px;height:1.10px;background:#6a6a6a;"></div>
<div class="abs" style="left:83.00px;top:248.64px;width:6.00px;height:1.10px;background:#6a6a6a;"></div>
<div class="abs" style="left:83.00px;top:208.76px;width:6.00px;height:1.10px;background:#6a6a6a;"></div>
<div class="abs" style="left:83.00px;top:168.88px;width:6.00px;height:1.10px;background:#6a6a6a;"></div>
<div class="abs" style="left:83.00px;top:129.00px;width:6.00px;height:1.10px;background:#6a6a6a;"></div>
<div class="t" style="left:56.60px;top:563.18px;width:40px;height:10px;text-align:center;font-size:9.9px;color:#111;letter-spacing:-0.15px;transform:rotate(-90deg);">-10</div>
<div class="t" style="left:56.60px;top:523.30px;width:40px;height:10px;text-align:center;font-size:9.9px;color:#111;letter-spacing:-0.15px;transform:rotate(-90deg);">0</div>
<div class="t" style="left:56.60px;top:483.42px;width:40px;height:10px;text-align:center;font-size:9.9px;color:#111;letter-spacing:-0.15px;transform:rotate(-90deg);">10</div>
<div class="t" style="left:56.60px;top:443.54px;width:40px;height:10px;text-align:center;font-size:9.9px;color:#111;letter-spacing:-0.15px;transform:rotate(-90deg);">20</div>
<div class="t" style="left:56.60px;top:403.66px;width:40px;height:10px;text-align:center;font-size:9.9px;color:#111;letter-spacing:-0.15px;transform:rotate(-90deg);">30</div>
<div class="t" style="left:56.60px;top:363.78px;width:40px;height:10px;text-align:center;font-size:9.9px;color:#111;letter-spacing:-0.15px;transform:rotate(-90deg);">40</div>
<div class="t" style="left:56.60px;top:323.90px;width:40px;height:10px;text-align:center;font-size:9.9px;color:#111;letter-spacing:-0.15px;transform:rotate(-90deg);">50</div>
<div class="t" style="left:56.60px;top:284.02px;width:40px;height:10px;text-align:center;font-size:9.9px;color:#111;letter-spacing:-0.15px;transform:rotate(-90deg);">60</div>
<div class="t" style="left:56.60px;top:244.14px;width:40px;height:10px;text-align:center;font-size:9.9px;color:#111;letter-spacing:-0.15px;transform:rotate(-90deg);">70</div>
<div class="t" style="left:56.60px;top:204.26px;width:40px;height:10px;text-align:center;font-size:9.9px;color:#111;letter-spacing:-0.15px;transform:rotate(-90deg);">80</div>
<div class="t" style="left:56.60px;top:164.38px;width:40px;height:10px;text-align:center;font-size:9.9px;color:#111;letter-spacing:-0.15px;transform:rotate(-90deg);">90</div>
<div class="t" style="left:56.60px;top:124.50px;width:40px;height:10px;text-align:center;font-size:9.9px;color:#111;letter-spacing:-0.15px;transform:rotate(-90deg);">100</div>
<div class="abs" style="left:72.50px;top:110.00px;width:16.50px;height:18.00px;background:#f4f4f4;border-left:1px solid #c8c8c8;"></div>
<svg style="left:375.4px;top:122.4px" width="4.6" height="2.8" viewBox="0 0 6 4"><path d="M0 0H6L3 3.6z" fill="#111"/></svg>
<svg style="left:82.8px;top:380px" width="2.6" height="4.4" viewBox="0 0 4 6"><path d="M0 0V6L3.6 3z" fill="#111"/></svg>
<div class="abs" style="left:88.6px;top:127.8px;width:487.7px;height:440.1px;background:#000;overflow:hidden;"><svg style="left:0;top:0" width="487.7" height="440.1" viewBox="88.6 127.8 487.7 440.1"><path d="M114.8 568.2h1M114.8 528.3h1M114.8 488.4h1M114.8 448.5h1M114.8 408.7h1M114.8 368.8h1M114.8 328.9h1M114.8 289.0h1M114.8 249.1h1M114.8 209.3h1M114.8 169.4h1M114.8 129.5h1M154.7 568.2h1M154.7 528.3h1M154.7 488.4h1M154.7 448.5h1M154.7 408.7h1M154.7 368.8h1M154.7 328.9h1M154.7 289.0h1M154.7 249.1h1M154.7 209.3h1M154.7 169.4h1M154.7 129.5h1M194.6 568.2h1M194.6 528.3h1M194.6 488.4h1M194.6 448.5h1M194.6 408.7h1M194.6 368.8h1M194.6 328.9h1M194.6 289.0h1M194.6 249.1h1M194.6 209.3h1M194.6 169.4h1M194.6 129.5h1M234.5 568.2h1M234.5 528.3h1M234.5 488.4h1M234.5 448.5h1M234.5 408.7h1M234.5 368.8h1M234.5 328.9h1M234.5 289.0h1M234.5 249.1h1M234.5 209.3h1M234.5 169.4h1M234.5 129.5h1M274.3 568.2h1M274.3 528.3h1M274.3 488.4h1M274.3 448.5h1M274.3 408.7h1M274.3 368.8h1M274.3 328.9h1M274.3 289.0h1M274.3 249.1h1M274.3 209.3h1M274.3 169.4h1M274.3 129.5h1M314.2 568.2h1M314.2 528.3h1M314.2 488.4h1M314.2 448.5h1M314.2 408.7h1M314.2 368.8h1M314.2 328.9h1M314.2 289.0h1M314.2 249.1h1M314.2 209.3h1M314.2 169.4h1M314.2 129.5h1M354.1 568.2h1M354.1 528.3h1M354.1 488.4h1M354.1 448.5h1M354.1 408.7h1M354.1 368.8h1M354.1 328.9h1M354.1 289.0h1M354.1 249.1h1M354.1 209.3h1M354.1 169.4h1M354.1 129.5h1M394.0 568.2h1M394.0 528.3h1M394.0 488.4h1M394.0 448.5h1M394.0 408.7h1M394.0 368.8h1M394.0 328.9h1M394.0 289.0h1M394.0 249.1h1M394.0 209.3h1M394.0 169.4h1M394.0 129.5h1M433.9 568.2h1M433.9 528.3h1M433.9 488.4h1M433.9 448.5h1M433.9 408.7h1M433.9 368.8h1M433.9 328.9h1M433.9 289.0h1M433.9 249.1h1M433.9 209.3h1M433.9 169.4h1M433.9 129.5h1M473.7 568.2h1M473.7 528.3h1M473.7 488.4h1M473.7 448.5h1M473.7 408.7h1M473.7 368.8h1M473.7 328.9h1M473.7 289.0h1M473.7 249.1h1M473.7 209.3h1M473.7 169.4h1M473.7 129.5h1M513.6 568.2h1M513.6 528.3h1M513.6 488.4h1M513.6 448.5h1M513.6 408.7h1M513.6 368.8h1M513.6 328.9h1M513.6 289.0h1M513.6 249.1h1M513.6 209.3h1M513.6 169.4h1M513.6 129.5h1M553.5 568.2h1M553.5 528.3h1M553.5 488.4h1M553.5 448.5h1M553.5 408.7h1M553.5 368.8h1M553.5 328.9h1M553.5 289.0h1M553.5 249.1h1M553.5 209.3h1M553.5 169.4h1M553.5 129.5h1" stroke="#3c3c3c" stroke-width="1.1"/><path d="M155.5 120V570M553.7 120V570M80 528.5H580" stroke="#6e6e6e" stroke-width="1"/><defs><clipPath id="hc"><path d="M155.2 388.6H227.6L258.6 358L306 399.5L303 403V445.4H155.2z"/></clipPath></defs><path clip-path="url(#hc)" d="M-95.0 340.0L-215.0 460.0M-87.4 340.0L-207.4 460.0M-79.9 340.0L-199.9 460.0M-72.3 340.0L-192.3 460.0M-64.8 340.0L-184.8 460.0M-57.2 340.0L-177.2 460.0M-49.7 340.0L-169.7 460.0M-42.1 340.0L-162.1 460.0M-34.6 340.0L-154.6 460.0M-27.0 340.0L-147.0 460.0M-19.5 340.0L-139.5 460.0M-11.9 340.0L-131.9 460.0M-4.4 340.0L-124.4 460.0M3.2 340.0L-116.8 460.0M10.7 340.0L-109.3 460.0M18.3 340.0L-101.7 460.0M25.8 340.0L-94.2 460.0M33.4 340.0L-86.6 460.0M40.9 340.0L-79.1 460.0M48.5 340.0L-71.5 460.0M56.0 340.0L-64.0 460.0M63.6 340.0L-56.4 460.0M71.1 340.0L-48.9 460.0M78.7 340.0L-41.3 460.0M86.2 340.0L-33.8 460.0M93.8 340.0L-26.2 460.0M101.3 340.0L-18.7 460.0M108.9 340.0L-11.1 460.0M116.4 340.0L-3.6 460.0M124.0 340.0L4.0 460.0M131.5 340.0L11.5 460.0M139.1 340.0L19.1 460.0M146.6 340.0L26.6 460.0M154.2 340.0L34.2 460.0M161.7 340.0L41.7 460.0M169.3 340.0L49.3 460.0M176.8 340.0L56.8 460.0M184.4 340.0L64.4 460.0M191.9 340.0L71.9 460.0M199.5 340.0L79.5 460.0M207.0 340.0L87.0 460.0M214.6 340.0L94.6 460.0M222.1 340.0L102.1 460.0M229.7 340.0L109.7 460.0M237.2 340.0L117.2 460.0M244.8 340.0L124.8 460.0M252.3 340.0L132.3 460.0M259.9 340.0L139.9 460.0M267.4 340.0L147.4 460.0M275.0 340.0L155.0 460.0M282.5 340.0L162.5 460.0M290.1 340.0L170.1 460.0M297.6 340.0L177.6 460.0M305.2 340.0L185.2 460.0M312.7 340.0L192.7 460.0M320.3 340.0L200.3 460.0M327.8 340.0L207.8 460.0M335.4 340.0L215.4 460.0M342.9 340.0L222.9 460.0M350.5 340.0L230.5 460.0M358.0 340.0L238.0 460.0M365.6 340.0L245.6 460.0M373.1 340.0L253.1 460.0M380.7 340.0L260.7 460.0M388.2 340.0L268.2 460.0M395.8 340.0L275.8 460.0M403.3 340.0L283.3 460.0M410.9 340.0L290.9 460.0M418.4 340.0L298.4 460.0M426.0 340.0L306.0 460.0M433.5 340.0L313.5 460.0M441.1 340.0L321.1 460.0M448.6 340.0L328.6 460.0M456.2 340.0L336.2 460.0M463.7 340.0L343.7 460.0M471.3 340.0L351.3 460.0M478.8 340.0L358.8 460.0M486.4 340.0L366.4 460.0M493.9 340.0L373.9 460.0M501.5 340.0L381.5 460.0M509.0 340.0L389.0 460.0M516.6 340.0L396.6 460.0M524.1 340.0L404.1 460.0M531.7 340.0L411.7 460.0M539.2 340.0L419.2 460.0M546.8 340.0L426.8 460.0M554.3 340.0L434.3 460.0M561.9 340.0L441.9 460.0M569.4 340.0L449.4 460.0M577.0 340.0L457.0 460.0M584.5 340.0L464.5 460.0M592.1 340.0L472.1 460.0M599.6 340.0L479.6 460.0" stroke="#00b400" stroke-width="1.05"/><path d="M155.6 163.6V389 M282.4 243.8V333 M324.6 203.8V382 M454.4 163.6V527.8 M474.4 381.2V570 M514.3 333.2V570 M155.6 169.5H454.4 M155.6 209H324.6 M155.6 248.9H282.4 M282.4 333.1H519.2 M324.6 381.3H480.2 M88 388.5H156 M145.6 497.4H171.6" stroke="#ececec" stroke-width="1.15" fill="none"/><path d="M155.6 169.5L165.8 167.9L165.8 171.1z" fill="#fff"/><path d="M454.4 169.5L444.2 171.1L444.2 167.9z" fill="#fff"/><path d="M155.6 209.0L165.8 207.4L165.8 210.6z" fill="#fff"/><path d="M324.6 209.0L314.4 210.6L314.4 207.4z" fill="#fff"/><path d="M155.6 248.9L165.8 247.3L165.8 250.5z" fill="#fff"/><path d="M282.4 248.9L272.2 250.5L272.2 247.3z" fill="#fff"/><path d="M514.3 333.2L515.8 343.4L512.8 343.4z" fill="#fff"/><path d="M474.4 381.2L475.9 391.4L472.8 391.4z" fill="#fff"/><path d="M155.3 497.4L145.3 498.9L145.3 495.8z" fill="#fff"/><path d="M161.6 497.4L171.6 495.8L171.6 498.9z" fill="#fff"/><path d="M155.2 570V388.6H227.6L282.4 332.9L324.6 381.2L306 399.5 M258.6 358L306 399.5L303 403V570 M324.6 381.2V570 M155.2 445.4H303 M155.2 455.6L161.4 461H303 M161.4 461V570" stroke="#ffffff" stroke-width="1.55" fill="none" stroke-linejoin="miter"/><path d="M115.5 528.4H580" stroke="#e00000" stroke-width="1.15" stroke-dasharray="9.4 3.9 0.9 2.9" stroke-dashoffset="6.8"/><path d="M139.5 528.4H172.7" stroke="#e00000" stroke-width="1.15"/><path d="M155.3 513V543.5" stroke="#e83838" stroke-width="1"/><path d="M253.2 328.4L454.9 528.2" stroke="#cc0000" stroke-width="1.1" stroke-dasharray="9.4 3.9 0.9 2.9" stroke-dashoffset="3"/><path d="M454.9 528.2L412 571.1" stroke="#cc0000" stroke-width="1.1" stroke-dasharray="9.4 3.9 0.9 2.9" stroke-dashoffset="0"/><path d="M226.4 328.6h1.4M231.4 328.6h1.4M236 328.6h9.6M248.6 328.6h1.4" stroke="#cc0000" stroke-width="1.2"/><g transform="translate(292.40 165.60) scale(1.120) translate(0 -10)" fill="none" stroke="#c8c8c8" stroke-width="0.85" stroke-linecap="butt" stroke-linejoin="round"><path transform="translate(0.00 0)" d="M0 0H4.8L1.4 10"/><path transform="translate(6.90 0)" d="M4.6 0H.6L.2 4.6Q1.2 3.7 2.4 3.7Q4.8 3.7 4.8 6.8Q4.8 10 2.4 10Q.7 10 0 8.6"/></g><g transform="translate(307.50 159.20) scale(0.440) translate(0 -10)" fill="none" stroke="#c8c8c8" stroke-width="2.05" stroke-linecap="butt" stroke-linejoin="round"><path transform="translate(0.00 0)" d="M0 2.4Q0 0 2.4 0Q4.8 0 4.8 2.4V7.6Q4.8 10 2.4 10Q0 10 0 7.6z"/></g><g transform="translate(307.50 165.60) scale(0.400) translate(0 -10)" fill="none" stroke="#c8c8c8" stroke-width="2.25" stroke-linecap="butt" stroke-linejoin="round"><path transform="translate(0.00 0)" d="M0 2.4Q0 0 2.4 0Q4.8 0 4.8 2.4V7.6Q4.8 10 2.4 10Q0 10 0 7.6z"/><path transform="translate(8.87 0)" d="M.3 9.2V10"/><path transform="translate(12.93 0)" d="M0 2.4Q0 0 2.4 0Q4.8 0 4.8 2.4V7.6Q4.8 10 2.4 10Q0 10 0 7.6z"/><path transform="translate(21.20 0)" d="M4.6 0H.6L.2 4.6Q1.2 3.7 2.4 3.7Q4.8 3.7 4.8 6.8Q4.8 10 2.4 10Q.7 10 0 8.6"/></g><g transform="translate(222.80 205.70) scale(1.110) translate(0 -10)" fill="none" stroke="#c8c8c8" stroke-width="0.86" stroke-linecap="butt" stroke-linejoin="round"><path transform="translate(0.00 0)" d="M3.7 0L0 7H6M4.3 4.4V10"/><path transform="translate(8.00 0)" d="M0 2.2Q.2 0 2.4 0Q4.8 0 4.8 2.5Q4.8 4.2 3 6L0 10H4.8"/><path transform="translate(15.41 0)" d="M.3 9.2V10"/><path transform="translate(18.01 0)" d="M3.7 0L0 7H6M4.3 4.4V10"/><path transform="translate(26.01 0)" d="M0 1.4Q.7 0 2.4 0Q4.8 0 4.8 2.4Q4.8 4.7 2 4.7Q4.8 4.7 4.8 7.4Q4.8 10 2.4 10Q.7 10 0 8.6"/></g><g transform="translate(191.90 245.70) scale(1.110) translate(0 -10)" fill="none" stroke="#c8c8c8" stroke-width="0.86" stroke-linecap="butt" stroke-linejoin="round"><path transform="translate(0.00 0)" d="M0 1.4Q.7 0 2.4 0Q4.8 0 4.8 2.4Q4.8 4.7 2 4.7Q4.8 4.7 4.8 7.4Q4.8 10 2.4 10Q.7 10 0 8.6"/><path transform="translate(6.98 0)" d="M0 2.7L2.7 0V10"/><path transform="translate(12.47 0)" d="M.3 9.2V10"/><path transform="translate(15.25 0)" d="M2.4 0Q.4 0 .4 2.4Q.4 4.7 2.4 4.7Q4.4 4.7 4.4 2.4Q4.4 0 2.4 0M2.4 4.7Q0 4.7 0 7.4Q0 10 2.4 10Q4.8 10 4.8 7.4Q4.8 4.7 2.4 4.7"/><path transform="translate(22.24 0)" d="M0 1.4Q.7 0 2.4 0Q4.8 0 4.8 2.4Q4.8 4.7 2 4.7Q4.8 4.7 4.8 7.4Q4.8 10 2.4 10Q.7 10 0 8.6"/><path transform="translate(29.22 0)" d="M0 4H4.8M2.4 2.1V5.9M0 7.9H4.8"/><path transform="translate(36.21 0)" d="M0 2.4Q0 0 2.4 0Q4.8 0 4.8 2.4V7.6Q4.8 10 2.4 10Q0 10 0 7.6z"/><path transform="translate(43.79 0)" d="M.3 9.2V10"/><path transform="translate(46.58 0)" d="M0 2.7L2.7 0V10"/></g><g transform="translate(136.00 494.00) scale(1.080) translate(0 -10)" fill="none" stroke="#c8c8c8" stroke-width="0.88" stroke-linecap="butt" stroke-linejoin="round"><path transform="translate(0.00 0)" d="M0 2.7L2.7 0V10"/><path transform="translate(5.73 0)" d="M.3 9.2V10"/><path transform="translate(8.76 0)" d="M4.6 0H.6L.2 4.6Q1.2 3.7 2.4 3.7Q4.8 3.7 4.8 6.8Q4.8 10 2.4 10Q.7 10 0 8.6"/><path transform="translate(15.99 0)" d="M0 3.8L4.6 10M4.6 3.8L0 10"/><path transform="translate(23.02 0)" d="M3.7 0L0 7H6M4.3 4.4V10"/><path transform="translate(31.45 0)" d="M4.6 0H.6L.2 4.6Q1.2 3.7 2.4 3.7Q4.8 3.7 4.8 6.8Q4.8 10 2.4 10Q.7 10 0 8.6"/><path transform="translate(38.68 0)" d="M1.4 0A1.4 1.6 0 1 0 1.41 0z"/></g><g transform="translate(470.80 550.20) rotate(-90) scale(1.060) translate(0 -10)" fill="none" stroke="#c8c8c8" stroke-width="0.90" stroke-linecap="butt" stroke-linejoin="round"><path transform="translate(0.00 0)" d="M3.1 2.6A3.1 3.3 0 1 0 3.11 2.6zM3.1 .6V10.6"/><path transform="translate(8.96 0)" d="M0 0H4.8L1.4 10"/><path transform="translate(16.52 0)" d="M0 1.4Q.7 0 2.4 0Q4.8 0 4.8 2.4Q4.8 4.7 2 4.7Q4.8 4.7 4.8 7.4Q4.8 10 2.4 10Q.7 10 0 8.6"/><path transform="translate(24.68 0)" d="M.3 9.2V10"/><path transform="translate(28.04 0)" d="M4.4 0Q0 2.8 0 7.2Q0 10 2.4 10Q4.8 10 4.8 7.2Q4.8 4.4 2.4 4.4Q.5 4.4 0 7"/><path transform="translate(35.60 0)" d="M3.7 0L0 7H6M4.3 4.4V10"/></g><g transform="translate(511.10 562.30) rotate(-90) scale(1.120) translate(0 -10)" fill="none" stroke="#c8c8c8" stroke-width="0.85" stroke-linecap="butt" stroke-linejoin="round"><path transform="translate(0.00 0)" d="M3.1 2.6A3.1 3.3 0 1 0 3.11 2.6zM3.1 .6V10.6"/><path transform="translate(8.58 0)" d="M.4 10Q4.8 7.2 4.8 2.8Q4.8 0 2.4 0Q0 0 0 2.8Q0 5.6 2.4 5.6Q4.3 5.6 4.8 3"/><path transform="translate(15.77 0)" d="M0 0H4.8L1.4 10"/><path transform="translate(23.55 0)" d="M.3 9.2V10"/><path transform="translate(26.53 0)" d="M4.4 0Q0 2.8 0 7.2Q0 10 2.4 10Q4.8 10 4.8 7.2Q4.8 4.4 2.4 4.4Q.5 4.4 0 7"/><path transform="translate(33.72 0)" d="M4.4 0Q0 2.8 0 7.2Q0 10 2.4 10Q4.8 10 4.8 7.2Q4.8 4.4 2.4 4.4Q.5 4.4 0 7"/><path transform="translate(46.68 0)" d="M0 0V10M0 6.2Q0 4 2.2 4Q4.4 4 4.4 6.2V10"/><path transform="translate(53.47 0)" d="M0 2.7L2.7 0V10"/><path transform="translate(58.55 0)" d="M0 2.7L2.7 0V10"/></g><g transform="translate(237.9 328.2) rotate(0)"><path d="M13 -22L0 0L-6.4 -9.9H6" fill="none" stroke="#e0e0e0" stroke-width="1"/><g transform="translate(-8.10 -11.20) scale(1.040) translate(0 -10)" fill="none" stroke="#c8c8c8" stroke-width="0.91" stroke-linecap="butt" stroke-linejoin="round"><path transform="translate(0.00 0)" d="M0 10V0L5.6 10V0"/><path transform="translate(9.05 0)" d="M4.4 0Q0 2.8 0 7.2Q0 10 2.4 10Q4.8 10 4.8 7.2Q4.8 4.4 2.4 4.4Q.5 4.4 0 7"/></g></g><g transform="translate(155.0 423.0) rotate(-90)"><path d="M13 -22L0 0L-6.4 -9.9H6" fill="none" stroke="#e0e0e0" stroke-width="1"/><g transform="translate(-8.10 -11.20) scale(1.040) translate(0 -10)" fill="none" stroke="#c8c8c8" stroke-width="0.91" stroke-linecap="butt" stroke-linejoin="round"><path transform="translate(0.00 0)" d="M0 10V0L5.6 10V0"/><path transform="translate(9.05 0)" d="M4.4 0Q0 2.8 0 7.2Q0 10 2.4 10Q4.8 10 4.8 7.2Q4.8 4.4 2.4 4.4Q.5 4.4 0 7"/></g></g><rect x="151" y="377" width="7.8" height="7.8" fill="#0000c0"/></svg></div>
<div class="abs" style="left:576.50px;top:128.00px;width:12.50px;height:440.00px;background:linear-gradient(90deg,#e9e9e9,#f3f3f3 40%,#f1f1f1);border-right:1px solid #fff;"></div>
<svg style="left:580.6px;top:133px" width="5" height="3.4" viewBox="0 0 6 4"><path d="M0 3.6L3 0L6 3.6z" fill="#5a5a5a"/></svg>
<svg style="left:580.6px;top:559.6px" width="5" height="3.4" viewBox="0 0 6 4"><path d="M0 0L3 3.6L6 0z" fill="#5a5a5a"/></svg>
<div class="abs" style="left:577.50px;top:275.30px;width:11.00px;height:92.10px;border:1px solid #b2b2b2;border-radius:2px;background:linear-gradient(90deg,#f4f4f4 0,#e9e9e9 45%,#d9d9d9 50%,#cfcfcf 100%);box-shadow:inset 0 0 0 1px rgba(255,255,255,.7);"></div>
<div class="abs" style="left:580.20px;top:318.00px;width:5.40px;height:1.00px;background:#6a6a6a;box-shadow:0 1.8px 0 #6a6a6a,0 3.6px 0 #6a6a6a,0 5.4px 0 #6a6a6a;"></div>
<div class="abs" style="left:72.00px;top:568.00px;width:517.00px;height:13.00px;background:linear-gradient(#e8e8e8,#f2f2f2 40%,#f0f0f0);"></div>
<div class="abs" style="left:72.50px;top:568.00px;width:16.50px;height:13.00px;background:#f4f4f4;border-left:1px solid #c8c8c8;border-bottom:1px solid #d8d8d8;"></div>
<svg style="left:93.6px;top:571.4px" width="4" height="6" viewBox="0 0 4 6"><path d="M3.6 0L0 3L3.6 6z" fill="#444"/></svg>
<svg style="left:535.4px;top:571.4px" width="4" height="6" viewBox="0 0 4 6"><path d="M0 0L3.6 3L0 6z" fill="#444"/></svg>
<div class="abs" style="left:244.20px;top:568.80px;width:98.40px;height:11.00px;border:1px solid #b2b2b2;border-radius:2px;background:linear-gradient(#f4f4f4 0,#e9e9e9 45%,#d9d9d9 50%,#cfcfcf 100%);box-shadow:inset 0 0 0 1px rgba(255,255,255,.7);"></div>
<div class="abs" style="left:290.80px;top:572.00px;width:1.00px;height:5.00px;background:#6a6a6a;box-shadow:1.8px 0 0 #6a6a6a,3.6px 0 0 #6a6a6a,5.4px 0 0 #6a6a6a;"></div>
<div class="t" style="left:559.60px;top:570.75px;font-size:8.80px;transform:scaleX(0.9621);transform-origin:0 0;color:#111;">10 / 100</div>
<div class="abs" style="left:592.00px;top:91.80px;width:201.00px;height:15.00px;background:#d9d9d9;border:1px solid #cdcdcd;border-color:#e4e4e4 #d0d0d0 #c6c6c6 #d0d0d0;"></div>
<div class="t" style="left:594.00px;top:95.24px;font-size:9.40px;transform:scaleX(0.8773);transform-origin:0 0;color:#111;">Property Editor</div>
<svg style="left:771px;top:96.4px" width="8" height="8" viewBox="0 0 8 8"><path d="M2.5 .8H7.2V5H2.5z" fill="none" stroke="#111" stroke-width="1.2"/><path d="M2.2 1.2H7.4" stroke="#111" stroke-width="1.6"/><path d="M.7 3.2H5V7.3H.7z" fill="#d9d9d9" stroke="#111" stroke-width="1.1"/><path d="M.4 3.4H5.2" stroke="#111" stroke-width="1.5"/></svg>
<svg style="left:783.5px;top:96.8px" width="7" height="7" viewBox="0 0 7 7"><path d="M.6 .6L6.4 6.4M6.4 .6L.6 6.4" stroke="#111" stroke-width="1.5"/></svg>
<div class="abs" style="left:592.00px;top:108.80px;width:201.00px;height:285.60px;background:#f0f0f0;border:1px solid #9aa0a8;border-color:#a0a4aa #c4c8cc #8e959e #a0a4aa;"></div>
<div class="abs" style="left:781.60px;top:109.80px;width:10.60px;height:283.60px;background:linear-gradient(90deg,#e7e7e7,#f3f3f3 45%,#f0f0f0);"></div>
<svg style="left:784px;top:113.8px" width="6" height="4" viewBox="0 0 6 4"><path d="M0 3.6L3 0L6 3.6z" fill="#555"/></svg>
<svg style="left:784px;top:385.6px" width="6" height="4" viewBox="0 0 6 4"><path d="M0 0L3 3.6L6 0z" fill="#555"/></svg>
<div class="abs" style="left:781.60px;top:123.60px;width:10.60px;height:194.20px;border:1px solid #b2b2b2;border-radius:2px;background:linear-gradient(90deg,#f4f4f4 0,#e9e9e9 45%,#d9d9d9 50%,#cfcfcf 100%);box-shadow:inset 0 0 0 1px rgba(255,255,255,.7);"></div>
<div class="abs" style="left:784.40px;top:217.00px;width:5.20px;height:1.00px;background:#6a6a6a;box-shadow:0 1.8px 0 #6a6a6a,0 3.6px 0 #6a6a6a,0 5.4px 0 #6a6a6a;"></div>
<div class="t" style="left:599.80px;top:119.24px;font-size:9.40px;transform:scaleX(0.8624);transform-origin:0 0;color:#1c1c1c;">Selection:</div>
<div class="abs btn" style="left:641.00px;top:116.20px;width:131.40px;height:15.40px;"></div>
<svg style="left:761.8px;top:122.5px" width="6" height="4" viewBox="0 0 6 4"><path d="M0 0H6L3 3.4z" fill="#111"/></svg>
<div class="t" style="left:643.40px;top:119.24px;font-size:9.40px;transform:scaleX(0.8534);transform-origin:0 0;color:#1c1c1c;">Line (1)</div>
<div class="abs" style="left:601.00px;top:143.00px;width:171.00px;height:116.80px;border:1px solid #dcdfe3;border-radius:3px;"></div>
<div class="abs" style="left:605.00px;top:141.00px;width:32.40px;height:5.00px;background:#f0f0f0;"></div>
<div class="t" style="left:606.60px;top:137.24px;font-size:9.40px;transform:scaleX(0.8492);transform-origin:0 0;color:#1c1c1c;">General</div>
<div class="t" style="left:629.40px;top:155.24px;font-size:9.40px;transform:scaleX(0.9186);transform-origin:0 0;color:#1c1c1c;">Layer:</div>
<div class="t" style="left:630.80px;top:172.84px;font-size:9.40px;transform:scaleX(0.9013);transform-origin:0 0;color:#1c1c1c;">Color:</div>
<div class="t" style="left:610.50px;top:191.24px;font-size:9.40px;transform:scaleX(0.9021);transform-origin:0 0;color:#1c1c1c;">Lineweight:</div>
<div class="t" style="left:618.20px;top:209.44px;font-size:9.40px;transform:scaleX(0.9226);transform-origin:0 0;color:#1c1c1c;">Linetype:</div>
<div class="t" style="left:607.20px;top:227.44px;font-size:9.40px;transform:scaleX(0.9026);transform-origin:0 0;color:#1c1c1c;">Draw Order:</div>
<div class="t" style="left:624.20px;top:244.24px;font-size:9.40px;transform:scaleX(0.9012);transform-origin:0 0;color:#1c1c1c;">Handle:</div>
<div class="abs btn" style="left:658.00px;top:151.80px;width:88.00px;height:15.00px;"></div>
<svg style="left:735.4px;top:157.9px" width="6" height="4" viewBox="0 0 6 4"><path d="M0 0H6L3 3.4z" fill="#111"/></svg>
<div class="t" style="left:661.20px;top:155.24px;font-size:9.40px;transform:scaleX(0.8958);transform-origin:0 0;color:#1c1c1c;">construction</div>
<svg style="left:754.4px;top:155.4px" width="8" height="8" viewBox="0 0 8 8"><path d="M4 .4V7.6M.4 4H7.6" stroke="#d01818" stroke-width="1.7"/></svg>
<div class="abs btn" style="left:658.00px;top:169.00px;width:106.80px;height:15.80px;"></div>
<svg style="left:754.2px;top:175.5px" width="6" height="4" viewBox="0 0 6 4"><path d="M0 0H6L3 3.4z" fill="#111"/></svg>
<div class="abs" style="left:662.00px;top:172.80px;width:24.40px;height:7.60px;background:#fff;border:1px solid #111;"></div>
<div class="t" style="left:688.40px;top:172.84px;font-size:9.40px;transform:scaleX(0.8518);transform-origin:0 0;color:#1c1c1c;">By Layer</div>
<div class="abs btn" style="left:658.00px;top:187.40px;width:106.80px;height:15.80px;"></div>
<svg style="left:754.2px;top:193.9px" width="6" height="4" viewBox="0 0 6 4"><path d="M0 0H6L3 3.4z" fill="#111"/></svg>
<div class="abs" style="left:662.00px;top:195.20px;width:24.00px;height:1.00px;background:#555;"></div>
<div class="t" style="left:688.40px;top:191.24px;font-size:9.40px;transform:scaleX(0.8518);transform-origin:0 0;color:#1c1c1c;">By Layer</div>
<div class="abs btn" style="left:658.00px;top:205.80px;width:106.80px;height:15.80px;"></div>
<svg style="left:754.2px;top:212.3px" width="6" height="4" viewBox="0 0 6 4"><path d="M0 0H6L3 3.4z" fill="#111"/></svg>
<div class="t" style="left:688.40px;top:209.44px;font-size:9.40px;transform:scaleX(0.8518);transform-origin:0 0;color:#1c1c1c;">By Layer</div>
<div class="abs inp" style="left:658.80px;top:224.60px;width:106.00px;height:14.00px;"></div>
<div class="t" style="left:661.40px;top:227.61px;font-size:9.20px;transform:scaleX(0.8404);transform-origin:0 0;color:#1c1c1c;">30</div>
<div class="abs ro" style="left:658.80px;top:241.60px;width:106.00px;height:13.80px;"></div>
<div class="t" style="left:661.20px;top:244.41px;font-size:9.20px;transform:scaleX(0.9223);transform-origin:0 0;color:#1c1c1c;">0x70</div>
<div class="abs" style="left:601.00px;top:272.60px;width:171.00px;height:157.40px;border:1px solid #dcdfe3;border-radius:3px;"></div>
<div class="abs" style="left:605.00px;top:270.60px;width:40.40px;height:5.00px;background:#f0f0f0;"></div>
<div class="t" style="left:606.60px;top:266.84px;font-size:9.40px;transform:scaleX(0.8820);transform-origin:0 0;color:#1c1c1c;">Geometry</div>
<div class="t" style="left:606.80px;top:287.24px;font-size:9.40px;transform:scaleX(0.9119);transform-origin:0 0;color:#1c1c1c;">Length:</div>
<div class="abs inp" style="left:641.00px;top:284.60px;width:124.00px;height:14.20px;"></div>
<div class="t" style="left:643.80px;top:287.61px;font-size:9.20px;transform:scaleX(0.8599);transform-origin:0 0;color:#1c1c1c;">120</div>
<div class="t" style="left:612.20px;top:305.44px;font-size:9.40px;transform:scaleX(0.8704);transform-origin:0 0;color:#1c1c1c;">Angle:</div>
<div class="abs inp" style="left:641.00px;top:302.80px;width:124.00px;height:14.20px;"></div>
<div class="t" style="left:643.80px;top:305.81px;font-size:9.20px;color:#1c1c1c;">0</div>
<div class="t" style="left:607.60px;top:321.84px;font-size:9.40px;transform:scaleX(0.9805);transform-origin:0 0;font-weight:bold;">Start Point</div>
<div class="t" style="left:626.52px;top:337.24px;font-size:9.40px;color:#1c1c1c;">X:</div>
<div class="abs inp" style="left:641.00px;top:334.60px;width:124.00px;height:14.20px;"></div>
<div class="t" style="left:643.80px;top:337.61px;font-size:9.20px;color:#1c1c1c;">0</div>
<div class="t" style="left:627.04px;top:355.44px;font-size:9.40px;color:#1c1c1c;">Y:</div>
<div class="abs inp" style="left:641.00px;top:352.80px;width:124.00px;height:14.20px;"></div>
<div class="t" style="left:643.80px;top:355.81px;font-size:9.20px;transform:scaleX(0.9469);transform-origin:0 0;color:#1c1c1c;">36.82</div>
<div class="t" style="left:607.60px;top:371.84px;font-size:9.40px;transform:scaleX(0.9120);transform-origin:0 0;font-weight:bold;">End Point</div>
<div class="t" style="left:626.52px;top:386.84px;font-size:9.40px;color:#1c1c1c;">X:</div>
<div class="abs inp" style="left:641.00px;top:384.20px;width:124.00px;height:14.20px;"></div>
<div class="t" style="left:643.80px;top:387.21px;font-size:9.20px;transform:scaleX(0.8599);transform-origin:0 0;color:#1c1c1c;">120</div>
<div class="abs" style="left:593.50px;top:393.40px;width:188.00px;height:1.00px;background:#f0f0f0;"></div>
<div class="abs" style="left:592.50px;top:394.40px;width:201.00px;height:40.00px;background:#f0f0f0;"></div>
<div class="abs" style="left:592.00px;top:393.60px;width:201.00px;height:1.00px;background:#8e959e;"></div>
<div class="abs" style="left:583.40px;top:0.00px;width:0.00px;height:0.00px;"></div>
<div class="abs" style="left:592.00px;top:399.20px;width:201.00px;height:14.00px;background:#d9d9d9;border:1px solid #cdcdcd;border-color:#e4e4e4 #d0d0d0 #c6c6c6 #d0d0d0;"></div>
<div class="t" style="left:594.00px;top:401.64px;font-size:9.40px;transform:scaleX(0.8833);transform-origin:0 0;color:#111;">Layer List</div>
<svg style="left:771px;top:402.8px" width="8" height="8" viewBox="0 0 8 8"><path d="M2.5 .8H7.2V5H2.5z" fill="none" stroke="#111" stroke-width="1.2"/><path d="M2.2 1.2H7.4" stroke="#111" stroke-width="1.6"/><path d="M.7 3.2H5V7.3H.7z" fill="#d9d9d9" stroke="#111" stroke-width="1.1"/><path d="M.4 3.4H5.2" stroke="#111" stroke-width="1.5"/></svg>
<svg style="left:783.5px;top:403.2px" width="7" height="7" viewBox="0 0 7 7"><path d="M.6 .6L6.4 6.4M6.4 .6L.6 6.4" stroke="#111" stroke-width="1.5"/></svg>
<div class="abs btn" style="left:593.20px;top:416.20px;width:38.20px;height:14.60px;"></div>
<div class="abs btn" style="left:633.40px;top:416.20px;width:38.60px;height:14.60px;"></div>
<div class="abs btn" style="left:674.00px;top:416.20px;width:38.00px;height:14.60px;"></div>
<div class="abs btn" style="left:714.20px;top:416.20px;width:38.40px;height:14.60px;border-color:#c4c4c4;background:#f4f4f4;"></div>
<div class="abs btn" style="left:754.60px;top:416.20px;width:38.20px;height:14.60px;"></div>
<svg style="left:606.4px;top:419.4px" width="12" height="8" viewBox="0 0 12 8"><path d="M.5 4.2Q6 -2.4 11.5 4.2Q6 10.4 .5 4.2z" fill="#fff" stroke="#111" stroke-width="1.3"/><path d="M.8 3.5Q6 -2.2 11.2 3.5L9.6 3.2Q6 .6 2.4 3.2z" fill="#111" stroke="#111" stroke-width="1.2"/><circle cx="6" cy="4.4" r="2.35" fill="#111"/><circle cx="5.2" cy="3.7" r=".7" fill="#fff" fill-opacity=".8"/></svg>
<svg style="left:646.4px;top:419.4px" width="12" height="8" viewBox="0 0 12 8"><path d="M.5 4.2Q6 -2.4 11.5 4.2Q6 10.4 .5 4.2z" fill="#fff" stroke="#a9a9a9" stroke-width="1.3"/><path d="M.8 3.5Q6 -2.2 11.2 3.5L9.6 3.2Q6 .6 2.4 3.2z" fill="#a9a9a9" stroke="#a9a9a9" stroke-width="1.2"/><circle cx="6" cy="4.4" r="2.35" fill="#a0a0a0"/><circle cx="5.2" cy="3.7" r=".7" fill="#fff" fill-opacity=".8"/></svg>
<svg style="left:688.6px;top:418.8px" width="10" height="10" viewBox="0 0 10 10"><path d="M5 .6V9.4M.6 5H9.4" stroke="#d01010" stroke-width="2"/></svg>
<div class="abs" style="left:729.00px;top:422.80px;width:9.40px;height:1.80px;background:#8a8a8a;"></div>
<svg style="left:767px;top:417.8px" width="14" height="12" viewBox="0 0 14 12"><path d="M1 11L2 7.6L9.6 .8L12.2 3.4L4.6 10.2z" fill="#f0a830" stroke="#b87a1c" stroke-width=".6"/><path d="M9.6 .8L12.2 3.4L13 2.4L10.6 0z" fill="#e86a5a"/><path d="M1 11L2 7.6L4.6 10.2z" fill="#f6e2bc" stroke="#8a6a40" stroke-width=".4"/><path d="M1 11l1-.3l-.7-.7z" fill="#222"/></svg>
<div class="abs" style="left:592.00px;top:432.00px;width:202.00px;height:148.60px;background:#fff;border:1px solid #828790;border-right-color:#9aa0aa;"></div>
<div class="abs" style="left:594.00px;top:433.60px;width:198.40px;height:13.40px;background:linear-gradient(#f9fafc,#e9edf3);border:1px solid #dfe3ea;border-radius:2px;"></div>
<svg style="left:596.0px;top:436.3px" width="12" height="8" viewBox="0 0 12 8"><path d="M.5 4.2Q6 -2.4 11.5 4.2Q6 10.4 .5 4.2z" fill="#fff" stroke="#1d3c6a" stroke-width="1.3"/><path d="M.8 3.5Q6 -2.2 11.2 3.5L9.6 3.2Q6 .6 2.4 3.2z" fill="#1d3c6a" stroke="#1d3c6a" stroke-width="1.2"/><circle cx="6" cy="4.4" r="2.35" fill="#2a5a9a"/><circle cx="5.2" cy="3.7" r=".7" fill="#fff" fill-opacity=".8"/></svg>
<svg style="left:611.2px;top:435.1px" width="8" height="10" viewBox="0 0 8 10"><path d="M1.6 4.6V3Q1.6 .6 4 .6T6.4 3V4.6" fill="none" stroke="#7f9fc4" stroke-width="1.1"/><rect x=".4" y="4.2" width="7.2" height="5.4" rx=".6" fill="#7f9fc4"/></svg>
<div class="t" style="left:625.60px;top:435.64px;font-size:9.40px;color:#111;">0</div>
<svg style="left:596.0px;top:450.2px" width="12" height="8" viewBox="0 0 12 8"><path d="M.5 4.2Q6 -2.4 11.5 4.2Q6 10.4 .5 4.2z" fill="#fff" stroke="#111" stroke-width="1.3"/><path d="M.8 3.5Q6 -2.2 11.2 3.5L9.6 3.2Q6 .6 2.4 3.2z" fill="#111" stroke="#111" stroke-width="1.2"/><circle cx="6" cy="4.4" r="2.35" fill="#111"/><circle cx="5.2" cy="3.7" r=".7" fill="#fff" fill-opacity=".8"/></svg>
<svg style="left:611.2px;top:449.0px" width="8" height="10" viewBox="0 0 8 10"><path d="M1.6 4.6V3Q1.6 .6 4 .6T6.4 3V4.6" fill="none" stroke="#9a9a9a" stroke-width="1.1"/><rect x=".4" y="4.2" width="7.2" height="5.4" rx=".6" fill="#9a9a9a"/></svg>
<div class="t" style="left:625.60px;top:449.57px;font-size:9.40px;transform:scaleX(0.8864);transform-origin:0 0;color:#111;">axes</div>
<svg style="left:596.0px;top:464.2px" width="12" height="8" viewBox="0 0 12 8"><path d="M.5 4.2Q6 -2.4 11.5 4.2Q6 10.4 .5 4.2z" fill="#fff" stroke="#a8a8a8" stroke-width="1.3"/><path d="M.8 3.5Q6 -2.2 11.2 3.5L9.6 3.2Q6 .6 2.4 3.2z" fill="#a8a8a8" stroke="#a8a8a8" stroke-width="1.2"/><circle cx="6" cy="4.4" r="2.35" fill="#a0a0a0"/><circle cx="5.2" cy="3.7" r=".7" fill="#fff" fill-opacity=".8"/></svg>
<svg style="left:611.2px;top:463.0px" width="8" height="10" viewBox="0 0 8 10"><path d="M1.6 4.6V3Q1.6 .6 4 .6T6.4 3V4.6" fill="none" stroke="#9a9a9a" stroke-width="1.1"/><rect x=".4" y="4.2" width="7.2" height="5.4" rx=".6" fill="#9a9a9a"/></svg>
<div class="t" style="left:625.60px;top:463.50px;font-size:9.40px;transform:scaleX(0.9944);transform-origin:0 0;color:#111;">construction</div>
<svg style="left:596.0px;top:478.1px" width="12" height="8" viewBox="0 0 12 8"><path d="M.5 4.2Q6 -2.4 11.5 4.2Q6 10.4 .5 4.2z" fill="#fff" stroke="#111" stroke-width="1.3"/><path d="M.8 3.5Q6 -2.2 11.2 3.5L9.6 3.2Q6 .6 2.4 3.2z" fill="#111" stroke="#111" stroke-width="1.2"/><circle cx="6" cy="4.4" r="2.35" fill="#111"/><circle cx="5.2" cy="3.7" r=".7" fill="#fff" fill-opacity=".8"/></svg>
<svg style="left:611.2px;top:476.9px" width="8" height="10" viewBox="0 0 8 10"><path d="M1.6 4.6V3Q1.6 .6 4 .6T6.4 3V4.6" fill="none" stroke="#9a9a9a" stroke-width="1.1"/><rect x=".4" y="4.2" width="7.2" height="5.4" rx=".6" fill="#9a9a9a"/></svg>
<div class="t" style="left:625.60px;top:477.43px;font-size:9.40px;transform:scaleX(1.0078);transform-origin:0 0;color:#111;">contour</div>
<svg style="left:596.0px;top:492.0px" width="12" height="8" viewBox="0 0 12 8"><path d="M.5 4.2Q6 -2.4 11.5 4.2Q6 10.4 .5 4.2z" fill="#fff" stroke="#111" stroke-width="1.3"/><path d="M.8 3.5Q6 -2.2 11.2 3.5L9.6 3.2Q6 .6 2.4 3.2z" fill="#111" stroke="#111" stroke-width="1.2"/><circle cx="6" cy="4.4" r="2.35" fill="#111"/><circle cx="5.2" cy="3.7" r=".7" fill="#fff" fill-opacity=".8"/></svg>
<svg style="left:611.2px;top:490.8px" width="8" height="10" viewBox="0 0 8 10"><path d="M1.6 4.6V3Q1.6 .6 4 .6T6.4 3V4.6" fill="none" stroke="#9a9a9a" stroke-width="1.1"/><rect x=".4" y="4.2" width="7.2" height="5.4" rx=".6" fill="#9a9a9a"/></svg>
<div class="t" style="left:625.60px;top:491.36px;font-size:9.40px;transform:scaleX(0.9903);transform-origin:0 0;color:#111;">dim</div>
<svg style="left:596.0px;top:506.0px" width="12" height="8" viewBox="0 0 12 8"><path d="M.5 4.2Q6 -2.4 11.5 4.2Q6 10.4 .5 4.2z" fill="#fff" stroke="#111" stroke-width="1.3"/><path d="M.8 3.5Q6 -2.2 11.2 3.5L9.6 3.2Q6 .6 2.4 3.2z" fill="#111" stroke="#111" stroke-width="1.2"/><circle cx="6" cy="4.4" r="2.35" fill="#111"/><circle cx="5.2" cy="3.7" r=".7" fill="#fff" fill-opacity=".8"/></svg>
<svg style="left:611.2px;top:504.8px" width="8" height="10" viewBox="0 0 8 10"><path d="M1.6 4.6V3Q1.6 .6 4 .6T6.4 3V4.6" fill="none" stroke="#9a9a9a" stroke-width="1.1"/><rect x=".4" y="4.2" width="7.2" height="5.4" rx=".6" fill="#9a9a9a"/></svg>
<div class="t" style="left:625.60px;top:505.29px;font-size:9.40px;transform:scaleX(0.9828);transform-origin:0 0;color:#111;">hatch</div>
<svg style="left:596.0px;top:519.9px" width="12" height="8" viewBox="0 0 12 8"><path d="M.5 4.2Q6 -2.4 11.5 4.2Q6 10.4 .5 4.2z" fill="#fff" stroke="#111" stroke-width="1.3"/><path d="M.8 3.5Q6 -2.2 11.2 3.5L9.6 3.2Q6 .6 2.4 3.2z" fill="#111" stroke="#111" stroke-width="1.2"/><circle cx="6" cy="4.4" r="2.35" fill="#111"/><circle cx="5.2" cy="3.7" r=".7" fill="#fff" fill-opacity=".8"/></svg>
<svg style="left:611.2px;top:518.7px" width="8" height="10" viewBox="0 0 8 10"><path d="M1.6 4.6V3Q1.6 .6 4 .6T6.4 3V4.6" fill="none" stroke="#9a9a9a" stroke-width="1.1"/><rect x=".4" y="4.2" width="7.2" height="5.4" rx=".6" fill="#9a9a9a"/></svg>
<div class="t" style="left:625.60px;top:519.22px;font-size:9.40px;transform:scaleX(0.9640);transform-origin:0 0;color:#111;">hatch_border</div>
<div class="abs" style="left:6.00px;top:584.00px;width:788.00px;height:28.40px;background:#fff;"></div>
<div class="abs" style="left:6.00px;top:612.20px;width:788.00px;height:1.00px;background:#b0b0b0;"></div>
<div class="abs" style="left:6.00px;top:613.20px;width:788.00px;height:16.20px;background:#fff;"></div>
<div class="abs" style="left:6.00px;top:629.40px;width:788.00px;height:1.20px;background:#c4c4c4;"></div>
<div class="abs" style="left:0;top:583.6px;width:780px;height:28.4px;overflow:hidden;"><div class="abs" style="left:0;top:-583.6px;">
<div class="t" style="left:10.40px;top:579.21px;font-size:9.20px;transform:scaleX(0.8445);transform-origin:0 0;color:#2424d8;font-style:italic;">Command:</div>
<div class="t" style="left:51.00px;top:579.21px;font-size:9.20px;transform:scaleX(0.9140);transform-origin:0 0;color:#2424d8;">snapauto</div>
<div class="t" style="left:10.40px;top:589.11px;font-size:9.20px;transform:scaleX(0.8445);transform-origin:0 0;color:#2424d8;font-style:italic;">Command:</div>
<div class="t" style="left:51.00px;top:589.11px;font-size:9.20px;transform:scaleX(0.9140);transform-origin:0 0;color:#2424d8;">snapauto</div>
<div class="t" style="left:10.40px;top:599.01px;font-size:9.20px;transform:scaleX(0.8445);transform-origin:0 0;color:#2424d8;font-style:italic;">Command:</div>
<div class="t" style="left:51.00px;top:599.01px;font-size:9.20px;transform:scaleX(0.8571);transform-origin:0 0;color:#2424d8;">linemenu</div>
</div></div>
<div class="abs" style="left:6.00px;top:580.60px;width:788.00px;height:3.60px;background:linear-gradient(#f0f0f0,#f0f0f0 40%,#f9f9f9);"></div>
<div class="abs" style="left:6.00px;top:584.00px;width:1.00px;height:45.40px;background:#9a9a9a;"></div>
<div class="abs" style="left:793.40px;top:584.00px;width:0.80px;height:45.40px;background:#a8a8a8;"></div>
<div class="abs" style="left:781.40px;top:584.00px;width:12.00px;height:28.20px;background:#f1f1f1;border-left:1px solid #e6e6e6;"></div>
<svg style="left:784.6px;top:589.8px" width="5.4" height="3.4" viewBox="0 0 6 4"><path d="M0 3.6L3 0L6 3.6z" fill="#555"/></svg>
<svg style="left:784.6px;top:603.8px" width="5.4" height="3.4" viewBox="0 0 6 4"><path d="M0 0L3 3.6L6 0z" fill="#555"/></svg>
<div class="abs" style="left:782.40px;top:597.60px;width:11.00px;height:1.00px;background:#dcdcdc;"></div>
<div class="t" style="left:7.10px;top:617.70px;font-size:8.50px;transform:scaleX(0.9141);transform-origin:0 0;color:#111;">Command:</div>
<div class="t" style="left:7.60px;top:634.69px;font-size:8.40px;transform:scaleX(0.9800);transform-origin:0 0;color:#1a1a1a;">55.6638,36.4368</div>
<div class="t" style="left:7.60px;top:647.87px;font-size:8.90px;color:#1a1a1a;">-</div>
<div class="abs" style="left:124.00px;top:633.00px;width:1.00px;height:24.00px;background:#c4c4c4;"></div>
<div class="abs" style="left:125.00px;top:633.00px;width:1.00px;height:24.00px;background:#fbfbfb;"></div>
<div class="t" style="left:126.60px;top:634.69px;font-size:8.40px;transform:scaleX(1.0072);transform-origin:0 0;color:#1a1a1a;">66.529&lt;33.2083</div>
<div class="t" style="left:126.60px;top:647.87px;font-size:8.90px;color:#1a1a1a;">-</div>
<div class="abs" style="left:243.40px;top:633.00px;width:1.00px;height:24.00px;background:#c4c4c4;"></div>
<div class="abs" style="left:244.40px;top:633.00px;width:1.00px;height:24.00px;background:#fbfbfb;"></div>
<div class="t" style="left:262.00px;top:636.77px;font-size:7.60px;transform:scaleX(0.9060);transform-origin:0 0;color:#1a1a1a;">Select entity or region</div>
<div class="t" style="left:255.00px;top:646.77px;font-size:7.60px;transform:scaleX(0.8981);transform-origin:0 0;color:#1a1a1a;">Move entity or reference</div>
<svg style="left:333px;top:630.6px" width="25" height="28" viewBox="0 0 25 28"><defs><radialGradient id="mg" cx=".4" cy=".38" r=".7"><stop offset="0" stop-color="#ffffff"/><stop offset=".6" stop-color="#f4f5f7"/><stop offset="1" stop-color="#c9ccd2"/></radialGradient></defs><path d="M7.6 5.4Q6 3.4 6.6 1.6" fill="none" stroke="#8a8a8a" stroke-width=".8"/><ellipse cx="12.4" cy="15" rx="9.2" ry="11.2" transform="rotate(-20 12.4 15)" fill="url(#mg)" stroke="#b9bdc5" stroke-width=".9"/><path d="M4.2 14.6Q10 9.4 18.6 10.4" fill="none" stroke="#d9dce2" stroke-width=".7"/><ellipse cx="10.4" cy="9.6" rx="1.1" ry="1.9" fill="#4468dc" transform="rotate(-20 10.4 9.6)"/></svg>
<div class="t" style="left:448.60px;top:636.77px;font-size:7.60px;transform:scaleX(0.8984);transform-origin:0 0;color:#1a1a1a;">Selected entities:</div>
<div class="t" style="left:448.60px;top:646.77px;font-size:7.60px;transform:scaleX(0.8777);transform-origin:0 0;color:#1a1a1a;">1 Line on Layer "construction".</div>
<div class="abs" style="left:597.40px;top:633.00px;width:1.00px;height:24.00px;background:#c4c4c4;"></div>
<div class="abs" style="left:598.40px;top:633.00px;width:1.00px;height:24.00px;background:#fbfbfb;"></div>
<div class="abs" style="left:700.00px;top:633.00px;width:1.00px;height:24.00px;background:#c4c4c4;"></div>
<div class="abs" style="left:701.00px;top:633.00px;width:1.00px;height:24.00px;background:#fbfbfb;"></div>
<svg style="left:783px;top:648px" width="9" height="9" viewBox="0 0 9 9"><g fill="#b8b8b8"><rect x="6.4" y="6.4" width="1.6" height="1.6"/><rect x="6.4" y="3.4" width="1.6" height="1.6"/><rect x="3.4" y="6.4" width="1.6" height="1.6"/><rect x="6.4" y=".4" width="1.6" height="1.6"/><rect x="3.4" y="3.4" width="1.6" height="1.6"/><rect x=".4" y="6.4" width="1.6" height="1.6"/></g></svg>
</div>
</body>
</html>
